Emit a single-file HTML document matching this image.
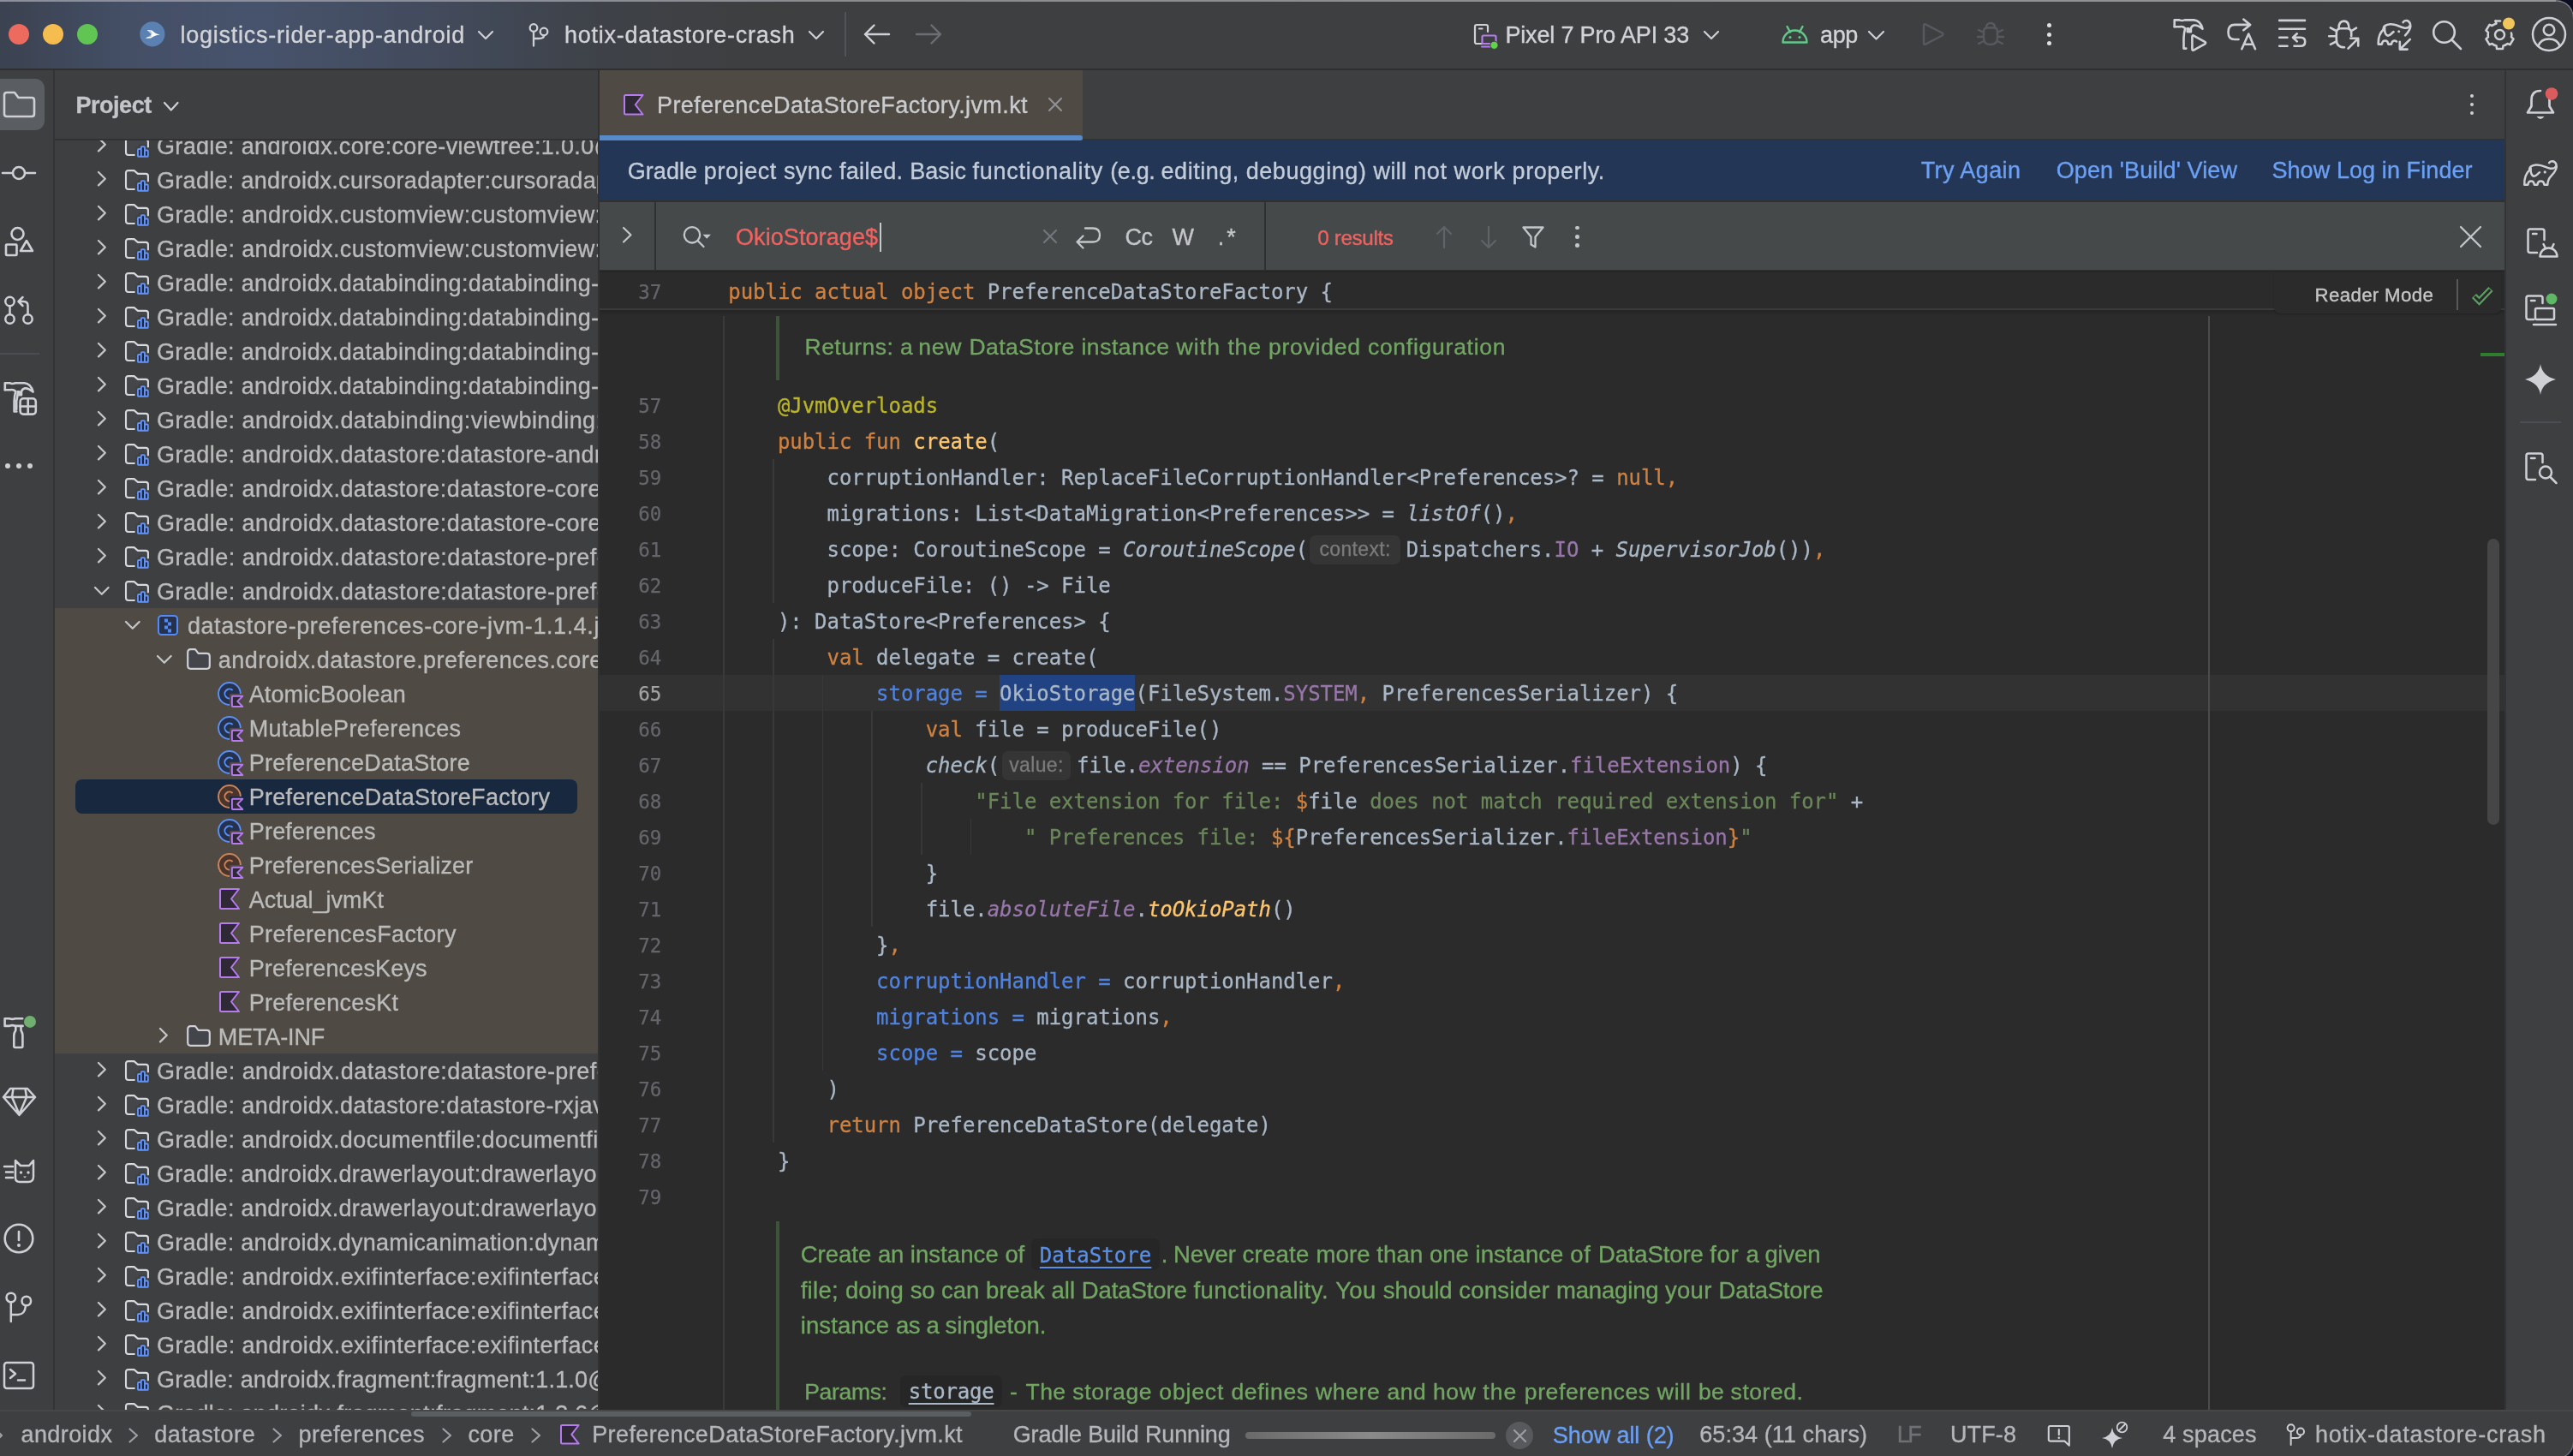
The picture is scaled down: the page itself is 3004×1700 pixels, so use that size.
<!DOCTYPE html>
<html lang="en"><head><meta charset="utf-8"><title>PreferenceDataStoreFactory.jvm.kt</title>
<style>
*{margin:0;padding:0;box-sizing:border-box}
html,body{width:3004px;height:1700px;overflow:hidden;background:#000}
#bg{position:absolute;left:0;top:0;width:3004px;height:1700px;background:#3e3f41}
#app{position:absolute;left:0;top:0;width:3004px;height:1700px;overflow:hidden;will-change:transform}
.r,.i,.t,.c{position:absolute}
.i{overflow:visible}
.t{white-space:pre;line-height:40px;height:40px;-webkit-text-stroke:0.35px currentColor}
.ui{font-family:"Liberation Sans",sans-serif;font-size:27px;font-weight:normal}
.uib{font-family:"Liberation Sans",sans-serif;font-size:27px;font-weight:bold}
.ui24{font-family:"Liberation Sans",sans-serif;font-size:24.3px;font-weight:normal}
.ui22{font-family:"Liberation Sans",sans-serif;font-size:22.3px;font-weight:normal}
.doc{font-family:"Liberation Sans",sans-serif;font-size:27.5px;font-weight:normal}
.docs{font-family:"Liberation Sans",sans-serif;font-size:26.5px;font-weight:normal}
.mono{font-family:"DejaVu Sans Mono","Liberation Mono",monospace;font-size:24px;font-weight:normal}

.ln{position:absolute;left:700px;width:72px;text-align:right;color:#64666b;height:42px;line-height:42px;font-size:22.5px;letter-spacing:-0.2px;-webkit-text-stroke:0.25px currentColor}
.cl{position:absolute;left:850.3px;height:42px;line-height:42px;white-space:pre;color:#a9b7c6;letter-spacing:-0.049px;-webkit-text-stroke:0.3px currentColor}
.k{color:#cf8140}.an{color:#bbb529}.fd{color:#ffc66d}.na{color:#5083e0}.p{color:#9876aa}.s{color:#6a8759}
.it{font-style:italic}
.hint{display:inline-block;vertical-align:top;height:34px;line-height:32px;margin-top:4px;border-radius:7px;background:#353535;color:#7b7b7b;
 font-family:"Liberation Sans",sans-serif;font-size:23px;font-style:normal;text-align:center;letter-spacing:0.35px}
</style></head>
<body><div id="bg"></div><div id="app">
<div class="r" style="left:0px;top:0px;width:3004px;height:80px;background:#3e3f41;background:linear-gradient(90deg,#3b4250 0px,#444f66 150px,#47536c 300px,#424a5b 520px,#3e4248 700px,#3e3f41 860px)"></div>
<div class="r" style="left:0px;top:80px;width:3004px;height:2px;background:#2d2f31;"></div>
<div class="r" style="left:10px;top:28px;width:24px;height:24px;background:#ed6a5f;border-radius:50%"></div>
<div class="r" style="left:50px;top:28px;width:24px;height:24px;background:#f5bd4f;border-radius:50%"></div>
<div class="r" style="left:90px;top:28px;width:24px;height:24px;background:#61c554;border-radius:50%"></div>
<svg class="i" style="left:160px;top:22px" width="36" height="36" viewBox="160 22 36 36"><circle cx="177.9" cy="39.8" r="14.6" fill="#5b80b2"/><path d="M186.8 40.4 C182.5 39.8 180 38 177.6 35.4 L171.6 35.1 L176 39.4 C176.8 40.1 176.8 40.6 176 41.2 L169.6 44.8 L176.2 44.6 C178.5 42.3 182 41 186.8 40.4 Z" fill="#fff"/><path d="M172.5 36.9 L176.5 37.2 M172.6 42.2 L176.6 42 M174.5 38.9 L177.6 39" stroke="#5b80b2" stroke-width="0.8" fill="none"/></svg>
<span class="t ui" style="left:210.6px;top:21.0px;color:#d1d3d7;letter-spacing:0.748px;">logistics-rider-app-android</span>
<svg class="i" style="left:556.5px;top:34.5px" width="20" height="12" viewBox="0 0 20 12" ><g fill="none" stroke="#ced0d6" stroke-width="2.2" stroke-linecap="round" stroke-linejoin="round" ><path d="M2 2 L10.0 10 L18 2"/></g></svg>
<svg class="i" style="left:617px;top:25.5px" width="26" height="30" viewBox="0 0 26 30" ><g fill="none" stroke="#ced0d6" stroke-width="2.3" stroke-linecap="round" stroke-linejoin="round" ><circle cx="6" cy="6.5" r="4.3"/><circle cx="18" cy="11" r="4.3"/><path d="M6 11 V27.5 M6 19 H12 Q18 19 18 15.5"/></g></svg>
<span class="t ui" style="left:659px;top:21.0px;color:#d1d3d7;letter-spacing:0.759px;">hotix-datastore-crash</span>
<svg class="i" style="left:942.5px;top:34.5px" width="20" height="12" viewBox="0 0 20 12" ><g fill="none" stroke="#ced0d6" stroke-width="2.2" stroke-linecap="round" stroke-linejoin="round" ><path d="M2 2 L10.0 10 L18 2"/></g></svg>
<div class="r" style="left:986px;top:14px;width:2px;height:52px;background:#505357;"></div>
<svg class="i" style="left:1007px;top:27px" width="34" height="26" viewBox="0 0 34 26" ><g fill="none" stroke="#ced0d6" stroke-width="2.4" stroke-linecap="round" stroke-linejoin="round" ><path d="M3 13 H31 M13.5 2.5 L3 13 L13.5 23.5"/></g></svg>
<svg class="i" style="left:1067px;top:27px" width="34" height="26" viewBox="0 0 34 26" ><g fill="none" stroke="#6b6e73" stroke-width="2.4" stroke-linecap="round" stroke-linejoin="round" transform="translate(34 0) scale(-1 1)"><path d="M3 13 H31 M13.5 2.5 L3 13 L13.5 23.5"/></g></svg>
<svg class="i" style="left:1720px;top:27px" width="30" height="31" viewBox="0 0 30 31" ><g fill="none" stroke="#ced0d6" stroke-width="2.2" stroke-linecap="round" stroke-linejoin="round" ><path d="M11 24 H4 Q2 24 2 22 V4 Q2 2 4 2 H15 Q17 2 17 4 V10 M7 6.5 H10.5"/></g><g fill="none" stroke="#b57bef" stroke-width="2.2" stroke-linecap="round" stroke-linejoin="round" ><rect x="10.5" y="14.5" width="16" height="9.5" rx="1.5"/><path d="M10 27.5 H20"/></g><circle cx="24.5" cy="25.8" r="4.6" fill="#5fd34a" stroke="#3c3f41" stroke-width="1"/></svg>
<span class="t ui" style="left:1757.4px;top:21.0px;color:#d1d3d7;letter-spacing:-0.166px;">Pixel 7 Pro API 33</span>
<svg class="i" style="left:1988.0px;top:34.5px" width="20" height="12" viewBox="0 0 20 12" ><g fill="none" stroke="#ced0d6" stroke-width="2.2" stroke-linecap="round" stroke-linejoin="round" ><path d="M2 2 L10.0 10 L18 2"/></g></svg>
<svg class="i" style="left:2079px;top:28px" width="34" height="24" viewBox="0 0 34 24" ><path d="M2.5 21.5 A14 14 0 0 1 30.5 21.5 Z" fill="none" stroke="#62c98a" stroke-width="2.4" stroke-linejoin="round"/><path d="M7.5 3 L11 9.5 M25.5 3 L22 9.5" stroke="#62c98a" stroke-width="2.4" stroke-linecap="round"/><circle cx="11" cy="15.5" r="1.5" fill="#62c98a"/><circle cx="22" cy="15.5" r="1.5" fill="#62c98a"/></svg>
<span class="t ui" style="left:2125px;top:21.0px;color:#d1d3d7;letter-spacing:-0.381px;">app</span>
<svg class="i" style="left:2180.0px;top:34.75px" width="21" height="12.5" viewBox="0 0 21 12.5" ><g fill="none" stroke="#ced0d6" stroke-width="2.2" stroke-linecap="round" stroke-linejoin="round" ><path d="M2 2 L10.5 10.5 L19 2"/></g></svg>
<svg class="i" style="left:2242px;top:25px" width="30" height="30" viewBox="0 0 30 30" ><g fill="none" stroke="#56595e" stroke-width="2.4" stroke-linecap="round" stroke-linejoin="round" ><path d="M4 4.5 Q4 2.5 6 3.4 L25.5 13.5 Q27.5 15 25.5 16.5 L6 26.6 Q4 27.5 4 25.5 Z"/></g></svg>
<svg class="i" style="left:2306px;top:23px" width="36" height="34" viewBox="0 0 36 34" ><g fill="none" stroke="#56595e" stroke-width="2.4" stroke-linecap="round" stroke-linejoin="round" ><path d="M10 14 Q10 9.5 14 9.5 H22 Q26 9.5 26 14 V21 Q26 29 18 29 Q10 29 10 21 Z M13 9 Q13 4 18 4 Q23 4 23 9 M10 15 L4 12 M10 20 H3 M10 25 L4 28 M26 15 L32 12 M26 20 H33 M26 25 L32 28"/></g></svg>
<div class="r" style="left:2389.5px;top:27.2px;width:5px;height:5px;background:#dfe1e5;border-radius:50%"></div>
<div class="r" style="left:2389.5px;top:37.5px;width:5px;height:5px;background:#dfe1e5;border-radius:50%"></div>
<div class="r" style="left:2389.5px;top:47.8px;width:5px;height:5px;background:#dfe1e5;border-radius:50%"></div>
<svg class="i" style="left:2530px;top:14px" width="52" height="52" viewBox="2530 14 52 52"><g fill="none" stroke="#ced0d6" stroke-width="2.6" stroke-linecap="round" stroke-linejoin="round" ><g transform="translate(2532.9 -423.9) scale(1.0)"><path d="M5.8 455.2 V447.3 H11.5 Q14.4 448.6 17.8 447.3 H28.5 Q36 447.8 38.6 457.6 Q33 452.8 28.8 453.4 Q26 454 25 457 V461.2 H22.4 V457.2 H20.9"/><path d="M20.9 457.2 V461"/><path d="M5.8 455.2 H12 Q15.5 454.2 18.3 457 Q16.8 462 16.6 468.5 V480.5 H19.4"/></g><path d="M2559.4 43 Q2559.4 40.6 2561.5 41.8 L2574.2 48.9 Q2576 50.1 2574.2 51.3 L2561.5 58.4 Q2559.4 59.6 2559.4 57.2 Z"/></g></svg>
<svg class="i" style="left:2594px;top:14px" width="48" height="52" viewBox="2594 14 48 52"><g fill="none" stroke="#ced0d6" stroke-width="2.6" stroke-linecap="round" stroke-linejoin="round" ><path d="M2626.8 28.9 H2609 Q2601.5 28.9 2601.5 37.4 Q2601.5 46 2609 46 H2613.5 M2619.3 22.6 L2627.2 28.9 L2619.3 35.3"/><path d="M2617.3 57.2 L2625.2 39.5 L2633 57.2 M2620 51.7 H2630.4"/></g></svg>
<svg class="i" style="left:2654px;top:14px" width="46" height="52" viewBox="2654 14 46 52"><g fill="none" stroke="#ced0d6" stroke-width="2.6" stroke-linecap="round" stroke-linejoin="round" ><path d="M2661.2 23.9 H2691 M2661.2 33.7 H2691 M2661.2 43.8 H2670.5 M2661.2 53.8 H2670.5"/><path d="M2678.5 53.8 H2686 Q2691.2 53.8 2691.2 48.8 Q2691.2 43.8 2686 43.8 H2677.5 M2681.8 39.3 L2677 43.8 L2681.8 48.4"/></g></svg>
<svg class="i" style="left:2712px;top:14px" width="50" height="52" viewBox="2712 14 50 52"><g fill="none" stroke="#ced0d6" stroke-width="2.6" stroke-linecap="round" stroke-linejoin="round" ><path d="M2737 55.3 Q2727.8 55.3 2727.8 46 V38.5 Q2727.8 33.2 2733 33.2 H2740 Q2745.2 33.2 2745.2 38.5 V42 M2730.6 32.5 Q2730.6 24.6 2736.5 24.6 Q2742.4 24.6 2742.4 32.5 M2727.5 36 L2720.8 32.4 M2727.5 42.2 H2719.2 M2727.5 48.5 L2720.8 51.8 M2745.5 36 L2751 32.6"/><path d="M2741.5 56.6 L2752.2 45.8 M2744.3 44.8 H2753.2 V53.6"/></g></svg>
<svg class="i" style="left:2770px;top:14px" width="52" height="52" viewBox="2770 14 52 52"><g fill="none" stroke="#ced0d6" stroke-width="2.6" stroke-linecap="round" stroke-linejoin="round" ><g transform="translate(-170.5 -164.1) scale(1)"><path d="M2976.1 190.2 C2977.5 187.5 2982.5 187 2984.3 191.5 C2985.8 196 2983.5 200.5 2978.6 205.4"/><path d="M2968.5 212.6 C2966.5 210.8 2963 211.2 2962.5 215.7 H2958.8 C2958.2 210.2 2952 210.2 2951.4 215.7 H2947.3 C2946.8 207 2949 202.5 2953.4 198.4"/><path d="M2953.4 198.4 C2952.5 194.8 2956 192.8 2961 192.4 C2968 192 2972 195.5 2977.5 196.7 C2980.5 197.2 2983 196.3 2984.3 194"/><path d="M2954.7 196.5 C2954.2 201 2955.5 205.5 2958.6 205.7 C2961 205.7 2962.5 203 2965 201.3"/></g></g><circle cx="2800.7" cy="36.8" r="1.5" fill="#ced0d6"/><g fill="none" stroke="#ced0d6" stroke-width="2.6" stroke-linecap="round" stroke-linejoin="round" ><path d="M2813.8 45.8 L2802.6 57 M2801.8 48.8 V57.6 H2810.6"/></g></svg>
<svg class="i" style="left:2838px;top:22px" width="38" height="38" viewBox="0 0 38 38" ><g fill="none" stroke="#ced0d6" stroke-width="2.6" stroke-linecap="round" stroke-linejoin="round" ><circle cx="15.5" cy="15.5" r="12.3"/><path d="M24.5 24.5 L35 35"/></g></svg>
<svg class="i" style="left:2897px;top:18px" width="42" height="44" viewBox="0 0 42 44" ><g fill="none" stroke="#ced0d6" stroke-width="2.5" stroke-linecap="round" stroke-linejoin="round" ><path d="M16.5 6.5 L17.5 9.5 Q14.5 10.3 12.5 12 L9.5 10.8 L5.5 17.5 L8 19.8 Q7.3 22.5 8 25.2 L5.5 27.5 L9.5 34.2 L12.5 33 Q14.5 34.7 17.5 35.5 L18 39 H25 L25.5 35.5 Q28.5 34.7 30.5 33 L33.5 34.2 L37.5 27.5 L35 25.2 Q35.7 22.5 35 20.5"/><path d="M16.5 6.5 H22"/><circle cx="21.5" cy="22.5" r="5.5"/></g><circle cx="32" cy="9.5" r="7" fill="#f2c55c"/></svg>
<svg class="i" style="left:2955px;top:19px" width="42" height="42" viewBox="0 0 42 42" ><g fill="none" stroke="#ced0d6" stroke-width="2.5" stroke-linecap="round" stroke-linejoin="round" ><circle cx="21" cy="21" r="19"/><circle cx="21" cy="16" r="6.3"/><path d="M8.5 35 Q11 26.5 21 26.5 Q31 26.5 33.5 35"/></g></svg>
<div class="r" style="left:62px;top:82px;width:2px;height:1565px;background:#323437;"></div>
<div class="r" style="left:-12px;top:92px;width:64px;height:60px;background:#5a5d61;border-radius:11px"></div>
<svg class="i" style="left:2px;top:105px" width="42" height="34" viewBox="0 0 42 34" ><g fill="none" stroke="#ced0d6" stroke-width="2.6" stroke-linecap="round" stroke-linejoin="round" ><path d="M3 6 Q3 3 6 3 H15 L19.5 9 H35 Q38 9 38 12 V28 Q38 31 35 31 H6 Q3 31 3 28 Z"/></g></svg>
<svg class="i" style="left:0px;top:190px" width="46" height="24" viewBox="0 0 46 24" ><g fill="none" stroke="#ced0d6" stroke-width="2.6" stroke-linecap="round" stroke-linejoin="round" ><path d="M3 12 H14 M30 12 H41"/><circle cx="22" cy="12" r="7"/></g></svg>
<svg class="i" style="left:2px;top:262px" width="42" height="40" viewBox="0 0 42 40" ><g fill="none" stroke="#ced0d6" stroke-width="2.6" stroke-linecap="round" stroke-linejoin="round" ><circle cx="18.5" cy="11" r="7"/><rect x="5" y="23.5" width="12.5" height="12.5" rx="1"/><path d="M29 19 L36 31 H22 Z"/></g></svg>
<svg class="i" style="left:2px;top:342px" width="42" height="40" viewBox="0 0 42 40" ><g fill="none" stroke="#ced0d6" stroke-width="2.5" stroke-linecap="round" stroke-linejoin="round" ><circle cx="9.5" cy="10" r="5.2"/><circle cx="9.5" cy="30.5" r="5.2"/><circle cx="30.5" cy="30.5" r="5.2"/><path d="M9.5 15.5 V25 M30.5 25 V15 Q30.5 10 25.5 10 H20 M24.5 5 L19.5 10 L24.5 15"/></g></svg>
<div class="r" style="left:0px;top:412px;width:46px;height:2px;background:#4a4d51;"></div>
<svg class="i" style="left:0px;top:440px" width="48" height="50" viewBox="0 440 48 50"><g fill="none" stroke="#ced0d6" stroke-width="2.6" stroke-linecap="round" stroke-linejoin="round" ><path d="M5.8 455.2 V447.3 H11.5 Q14.4 448.6 17.8 447.3 H28.5 Q36 447.8 38.6 457.6 Q33 452.8 28.8 453.4 Q26 454 25 457 V461.2 H22.4 V457.2 H20.9"/><path d="M20.9 457.2 Q20.6 463 19.2 468.5 V478"/><path d="M5.8 455.2 H12 Q15.5 454.2 18.3 457 Q16.8 462 16.6 468.5 V480.5 H19.4"/><rect x="23.6" y="465.3" width="18.2" height="18.3" rx="3.6"/><path d="M32.7 465.3 V483.6 M23.6 474.5 H41.8"/></g></svg>
<div class="r" style="left:5.8px;top:540.5999999999999px;width:6.4px;height:6.4px;background:#ced0d6;border-radius:50%"></div>
<div class="r" style="left:18.8px;top:540.5999999999999px;width:6.4px;height:6.4px;background:#ced0d6;border-radius:50%"></div>
<div class="r" style="left:31.8px;top:540.5999999999999px;width:6.4px;height:6.4px;background:#ced0d6;border-radius:50%"></div>
<svg class="i" style="left:0px;top:1180px" width="48" height="50" viewBox="0 1180 48 50"><g fill="none" stroke="#ced0d6" stroke-width="2.6" stroke-linecap="round" stroke-linejoin="round" ><path d="M26.2 1189.2 H17.7 Q14.4 1190.6 11 1189.2 H5.6 V1197.9 H11 Q14.4 1196.4 17.5 1197.9 H26.6"/><path d="M18.3 1198 V1203 Q16.3 1206 16.3 1209 V1221.5 Q16.3 1223 17.8 1223 H25 Q26.4 1223 26.4 1221.5 V1209 Q26.4 1206 24.5 1203 V1198"/></g><circle cx="35" cy="1192.9" r="7" fill="#70af70"/></svg>
<svg class="i" style="left:1px;top:1268px" width="44" height="38" viewBox="0 0 44 38" ><g fill="none" stroke="#ced0d6" stroke-width="2.5" stroke-linecap="round" stroke-linejoin="round" ><path d="M11 3 H31 L40 13 L21.5 34 L3 13 Z M3 13 H40 M14.5 3 L13 13 L21.5 33 M28.5 3 L30 13 L21.5 33"/></g></svg>
<svg class="i" style="left:2px;top:1350px" width="42" height="34" viewBox="0 0 42 34" ><g fill="none" stroke="#ced0d6" stroke-width="2.5" stroke-linecap="round" stroke-linejoin="round" ><path d="M16 5 L22 11 H32 L37 5 V24 Q37 30 31 30 H21 Q16 30 16 25 Z M3 12 H13 M5 18.5 H13 M5 25 H13"/></g><circle cx="22.5" cy="19" r="1.7" fill="#ced0d6"/><circle cx="31" cy="19" r="1.7" fill="#ced0d6"/><path d="M25 23.5 H29 L27 25.5 Z" fill="#ced0d6"/></svg>
<svg class="i" style="left:2px;top:1426px" width="40" height="40" viewBox="0 0 40 40" ><g fill="none" stroke="#ced0d6" stroke-width="2.6" stroke-linecap="round" stroke-linejoin="round" ><circle cx="20" cy="20" r="16.3"/><path d="M20 12 V22"/></g><circle cx="20" cy="28" r="2" fill="#ced0d6"/></svg>
<svg class="i" style="left:3px;top:1506px" width="38" height="42" viewBox="0 0 38 42" ><g fill="none" stroke="#ced0d6" stroke-width="2.5" stroke-linecap="round" stroke-linejoin="round" ><circle cx="9.8" cy="9" r="5.3"/><circle cx="27.8" cy="13" r="5.3"/><path d="M9.8 14.5 V37 M9.8 29 H18 Q26 29 27 18.5"/></g></svg>
<svg class="i" style="left:2px;top:1588px" width="40" height="36" viewBox="0 0 40 36" ><g fill="none" stroke="#ced0d6" stroke-width="2.5" stroke-linecap="round" stroke-linejoin="round" ><rect x="3" y="3" width="34" height="30" rx="3"/><path d="M10 11 L16 16 L10 21 M19 23.5 H27"/></g></svg>
<span class="t uib" style="left:88.4px;top:102.5px;color:#c3c5c9;letter-spacing:-0.458px;">Project</span>
<svg class="i" style="left:190.25px;top:118.25px" width="19.5" height="12.5" viewBox="0 0 19.5 12.5" ><g fill="none" stroke="#ced0d6" stroke-width="2.2" stroke-linecap="round" stroke-linejoin="round" ><path d="M2 2 L9.75 10.5 L17.5 2"/></g></svg>
<div class="r" style="left:64px;top:162px;width:634px;height:2px;background:#303234;"></div>
<div class="r" style="left:64px;top:710px;width:634px;height:520px;background:#4f4b44;"></div>
<div class="r" style="left:88px;top:910px;width:586px;height:40px;background:#17283f;border-radius:8px"></div>
<div class="r" style="left:698px;top:82px;width:2px;height:1565px;background:#2f3133;"></div>
<div class="c" style="left:64px;top:164px;width:634px;height:1483px;overflow:hidden">
<svg class="i" style="left:48.50000000000001px;top:-4.8px" width="11.8" height="19.4" viewBox="0 0 11.8 19.4" ><g fill="none" stroke="#c4c5c7" stroke-width="2.3" stroke-linecap="round" stroke-linejoin="round" stroke-linecap="butt"><path d="M2 2 L9.8 9.7 L2 17.4"/></g></svg>
<svg class="i" style="left:81px;top:-7.0px" width="32" height="30" viewBox="0 0 32 30" ><path d="M2 5.1 Q2 2.1 5 2.1 H11.6 L15.9 5.9 H25.2 Q27.9 5.9 27.9 8.6 V24 H5 Q2 24 2 21 Z" fill="#44464a"/><path d="M13.4 29 V15.6 Q13.4 14.4 14.6 14.4 H17.1 V12.8 Q17.1 11.6 18.3 11.6 H25.4 Q26.6 11.6 26.6 12.8 V15.9 H30.6 V29 Z" fill="#3e3f41"/><path d="M27.9 15.2 V8.6 Q27.9 5.9 25.2 5.9 H15.9 L11.6 2.1 H5 Q2 2.1 2 5.1 V21 Q2 24 5 24 H12.6" fill="none" stroke="#d6d8dc" stroke-width="2.1" stroke-linejoin="round" stroke-linecap="butt"/><g fill="#1b253c" stroke="#6494f8" stroke-width="1.9" stroke-linejoin="round"><rect x="16" y="17" width="3.8" height="8.8" rx="0.9"/><rect x="19.8" y="14.2" width="4.2" height="11.6" rx="0.9"/><rect x="24" y="18.5" width="3.8" height="7.3" rx="0.9"/></g></svg>
<span class="t ui" style="left:119.0px;top:-13.5px;color:#bbbbbb;letter-spacing:0.335px;">Gradle: androidx.core:core-viewtree:1.0.0@aar</span>
<svg class="i" style="left:48.50000000000001px;top:35.199999999999996px" width="11.8" height="19.4" viewBox="0 0 11.8 19.4" ><g fill="none" stroke="#c4c5c7" stroke-width="2.3" stroke-linecap="round" stroke-linejoin="round" stroke-linecap="butt"><path d="M2 2 L9.8 9.7 L2 17.4"/></g></svg>
<svg class="i" style="left:81px;top:33.0px" width="32" height="30" viewBox="0 0 32 30" ><path d="M2 5.1 Q2 2.1 5 2.1 H11.6 L15.9 5.9 H25.2 Q27.9 5.9 27.9 8.6 V24 H5 Q2 24 2 21 Z" fill="#44464a"/><path d="M13.4 29 V15.6 Q13.4 14.4 14.6 14.4 H17.1 V12.8 Q17.1 11.6 18.3 11.6 H25.4 Q26.6 11.6 26.6 12.8 V15.9 H30.6 V29 Z" fill="#3e3f41"/><path d="M27.9 15.2 V8.6 Q27.9 5.9 25.2 5.9 H15.9 L11.6 2.1 H5 Q2 2.1 2 5.1 V21 Q2 24 5 24 H12.6" fill="none" stroke="#d6d8dc" stroke-width="2.1" stroke-linejoin="round" stroke-linecap="butt"/><g fill="#1b253c" stroke="#6494f8" stroke-width="1.9" stroke-linejoin="round"><rect x="16" y="17" width="3.8" height="8.8" rx="0.9"/><rect x="19.8" y="14.2" width="4.2" height="11.6" rx="0.9"/><rect x="24" y="18.5" width="3.8" height="7.3" rx="0.9"/></g></svg>
<span class="t ui" style="left:119.0px;top:26.5px;color:#bbbbbb;letter-spacing:0.293px;">Gradle: androidx.cursoradapter:cursoradapter:1.0.0@aar</span>
<svg class="i" style="left:48.50000000000001px;top:75.2px" width="11.8" height="19.4" viewBox="0 0 11.8 19.4" ><g fill="none" stroke="#c4c5c7" stroke-width="2.3" stroke-linecap="round" stroke-linejoin="round" stroke-linecap="butt"><path d="M2 2 L9.8 9.7 L2 17.4"/></g></svg>
<svg class="i" style="left:81px;top:73.0px" width="32" height="30" viewBox="0 0 32 30" ><path d="M2 5.1 Q2 2.1 5 2.1 H11.6 L15.9 5.9 H25.2 Q27.9 5.9 27.9 8.6 V24 H5 Q2 24 2 21 Z" fill="#44464a"/><path d="M13.4 29 V15.6 Q13.4 14.4 14.6 14.4 H17.1 V12.8 Q17.1 11.6 18.3 11.6 H25.4 Q26.6 11.6 26.6 12.8 V15.9 H30.6 V29 Z" fill="#3e3f41"/><path d="M27.9 15.2 V8.6 Q27.9 5.9 25.2 5.9 H15.9 L11.6 2.1 H5 Q2 2.1 2 5.1 V21 Q2 24 5 24 H12.6" fill="none" stroke="#d6d8dc" stroke-width="2.1" stroke-linejoin="round" stroke-linecap="butt"/><g fill="#1b253c" stroke="#6494f8" stroke-width="1.9" stroke-linejoin="round"><rect x="16" y="17" width="3.8" height="8.8" rx="0.9"/><rect x="19.8" y="14.2" width="4.2" height="11.6" rx="0.9"/><rect x="24" y="18.5" width="3.8" height="7.3" rx="0.9"/></g></svg>
<span class="t ui" style="left:119.0px;top:66.5px;color:#bbbbbb;letter-spacing:0.392px;">Gradle: androidx.customview:customview:1.1.0@aar</span>
<svg class="i" style="left:48.50000000000001px;top:115.2px" width="11.8" height="19.4" viewBox="0 0 11.8 19.4" ><g fill="none" stroke="#c4c5c7" stroke-width="2.3" stroke-linecap="round" stroke-linejoin="round" stroke-linecap="butt"><path d="M2 2 L9.8 9.7 L2 17.4"/></g></svg>
<svg class="i" style="left:81px;top:113.0px" width="32" height="30" viewBox="0 0 32 30" ><path d="M2 5.1 Q2 2.1 5 2.1 H11.6 L15.9 5.9 H25.2 Q27.9 5.9 27.9 8.6 V24 H5 Q2 24 2 21 Z" fill="#44464a"/><path d="M13.4 29 V15.6 Q13.4 14.4 14.6 14.4 H17.1 V12.8 Q17.1 11.6 18.3 11.6 H25.4 Q26.6 11.6 26.6 12.8 V15.9 H30.6 V29 Z" fill="#3e3f41"/><path d="M27.9 15.2 V8.6 Q27.9 5.9 25.2 5.9 H15.9 L11.6 2.1 H5 Q2 2.1 2 5.1 V21 Q2 24 5 24 H12.6" fill="none" stroke="#d6d8dc" stroke-width="2.1" stroke-linejoin="round" stroke-linecap="butt"/><g fill="#1b253c" stroke="#6494f8" stroke-width="1.9" stroke-linejoin="round"><rect x="16" y="17" width="3.8" height="8.8" rx="0.9"/><rect x="19.8" y="14.2" width="4.2" height="11.6" rx="0.9"/><rect x="24" y="18.5" width="3.8" height="7.3" rx="0.9"/></g></svg>
<span class="t ui" style="left:119.0px;top:106.5px;color:#bbbbbb;letter-spacing:0.392px;">Gradle: androidx.customview:customview:1.1.0@aar</span>
<svg class="i" style="left:48.50000000000001px;top:155.20000000000002px" width="11.8" height="19.4" viewBox="0 0 11.8 19.4" ><g fill="none" stroke="#c4c5c7" stroke-width="2.3" stroke-linecap="round" stroke-linejoin="round" stroke-linecap="butt"><path d="M2 2 L9.8 9.7 L2 17.4"/></g></svg>
<svg class="i" style="left:81px;top:153.0px" width="32" height="30" viewBox="0 0 32 30" ><path d="M2 5.1 Q2 2.1 5 2.1 H11.6 L15.9 5.9 H25.2 Q27.9 5.9 27.9 8.6 V24 H5 Q2 24 2 21 Z" fill="#44464a"/><path d="M13.4 29 V15.6 Q13.4 14.4 14.6 14.4 H17.1 V12.8 Q17.1 11.6 18.3 11.6 H25.4 Q26.6 11.6 26.6 12.8 V15.9 H30.6 V29 Z" fill="#3e3f41"/><path d="M27.9 15.2 V8.6 Q27.9 5.9 25.2 5.9 H15.9 L11.6 2.1 H5 Q2 2.1 2 5.1 V21 Q2 24 5 24 H12.6" fill="none" stroke="#d6d8dc" stroke-width="2.1" stroke-linejoin="round" stroke-linecap="butt"/><g fill="#1b253c" stroke="#6494f8" stroke-width="1.9" stroke-linejoin="round"><rect x="16" y="17" width="3.8" height="8.8" rx="0.9"/><rect x="19.8" y="14.2" width="4.2" height="11.6" rx="0.9"/><rect x="24" y="18.5" width="3.8" height="7.3" rx="0.9"/></g></svg>
<span class="t ui" style="left:119.0px;top:146.5px;color:#bbbbbb;letter-spacing:0.328px;">Gradle: androidx.databinding:databinding-adapters:8.5.0@aar</span>
<svg class="i" style="left:48.50000000000001px;top:195.20000000000002px" width="11.8" height="19.4" viewBox="0 0 11.8 19.4" ><g fill="none" stroke="#c4c5c7" stroke-width="2.3" stroke-linecap="round" stroke-linejoin="round" stroke-linecap="butt"><path d="M2 2 L9.8 9.7 L2 17.4"/></g></svg>
<svg class="i" style="left:81px;top:193.0px" width="32" height="30" viewBox="0 0 32 30" ><path d="M2 5.1 Q2 2.1 5 2.1 H11.6 L15.9 5.9 H25.2 Q27.9 5.9 27.9 8.6 V24 H5 Q2 24 2 21 Z" fill="#44464a"/><path d="M13.4 29 V15.6 Q13.4 14.4 14.6 14.4 H17.1 V12.8 Q17.1 11.6 18.3 11.6 H25.4 Q26.6 11.6 26.6 12.8 V15.9 H30.6 V29 Z" fill="#3e3f41"/><path d="M27.9 15.2 V8.6 Q27.9 5.9 25.2 5.9 H15.9 L11.6 2.1 H5 Q2 2.1 2 5.1 V21 Q2 24 5 24 H12.6" fill="none" stroke="#d6d8dc" stroke-width="2.1" stroke-linejoin="round" stroke-linecap="butt"/><g fill="#1b253c" stroke="#6494f8" stroke-width="1.9" stroke-linejoin="round"><rect x="16" y="17" width="3.8" height="8.8" rx="0.9"/><rect x="19.8" y="14.2" width="4.2" height="11.6" rx="0.9"/><rect x="24" y="18.5" width="3.8" height="7.3" rx="0.9"/></g></svg>
<span class="t ui" style="left:119.0px;top:186.5px;color:#bbbbbb;letter-spacing:0.328px;">Gradle: androidx.databinding:databinding-common:8.5.0</span>
<svg class="i" style="left:48.50000000000001px;top:235.20000000000002px" width="11.8" height="19.4" viewBox="0 0 11.8 19.4" ><g fill="none" stroke="#c4c5c7" stroke-width="2.3" stroke-linecap="round" stroke-linejoin="round" stroke-linecap="butt"><path d="M2 2 L9.8 9.7 L2 17.4"/></g></svg>
<svg class="i" style="left:81px;top:233.0px" width="32" height="30" viewBox="0 0 32 30" ><path d="M2 5.1 Q2 2.1 5 2.1 H11.6 L15.9 5.9 H25.2 Q27.9 5.9 27.9 8.6 V24 H5 Q2 24 2 21 Z" fill="#44464a"/><path d="M13.4 29 V15.6 Q13.4 14.4 14.6 14.4 H17.1 V12.8 Q17.1 11.6 18.3 11.6 H25.4 Q26.6 11.6 26.6 12.8 V15.9 H30.6 V29 Z" fill="#3e3f41"/><path d="M27.9 15.2 V8.6 Q27.9 5.9 25.2 5.9 H15.9 L11.6 2.1 H5 Q2 2.1 2 5.1 V21 Q2 24 5 24 H12.6" fill="none" stroke="#d6d8dc" stroke-width="2.1" stroke-linejoin="round" stroke-linecap="butt"/><g fill="#1b253c" stroke="#6494f8" stroke-width="1.9" stroke-linejoin="round"><rect x="16" y="17" width="3.8" height="8.8" rx="0.9"/><rect x="19.8" y="14.2" width="4.2" height="11.6" rx="0.9"/><rect x="24" y="18.5" width="3.8" height="7.3" rx="0.9"/></g></svg>
<span class="t ui" style="left:119.0px;top:226.5px;color:#bbbbbb;letter-spacing:0.328px;">Gradle: androidx.databinding:databinding-ktx:8.5.0@aar</span>
<svg class="i" style="left:48.50000000000001px;top:275.2px" width="11.8" height="19.4" viewBox="0 0 11.8 19.4" ><g fill="none" stroke="#c4c5c7" stroke-width="2.3" stroke-linecap="round" stroke-linejoin="round" stroke-linecap="butt"><path d="M2 2 L9.8 9.7 L2 17.4"/></g></svg>
<svg class="i" style="left:81px;top:273.0px" width="32" height="30" viewBox="0 0 32 30" ><path d="M2 5.1 Q2 2.1 5 2.1 H11.6 L15.9 5.9 H25.2 Q27.9 5.9 27.9 8.6 V24 H5 Q2 24 2 21 Z" fill="#44464a"/><path d="M13.4 29 V15.6 Q13.4 14.4 14.6 14.4 H17.1 V12.8 Q17.1 11.6 18.3 11.6 H25.4 Q26.6 11.6 26.6 12.8 V15.9 H30.6 V29 Z" fill="#3e3f41"/><path d="M27.9 15.2 V8.6 Q27.9 5.9 25.2 5.9 H15.9 L11.6 2.1 H5 Q2 2.1 2 5.1 V21 Q2 24 5 24 H12.6" fill="none" stroke="#d6d8dc" stroke-width="2.1" stroke-linejoin="round" stroke-linecap="butt"/><g fill="#1b253c" stroke="#6494f8" stroke-width="1.9" stroke-linejoin="round"><rect x="16" y="17" width="3.8" height="8.8" rx="0.9"/><rect x="19.8" y="14.2" width="4.2" height="11.6" rx="0.9"/><rect x="24" y="18.5" width="3.8" height="7.3" rx="0.9"/></g></svg>
<span class="t ui" style="left:119.0px;top:266.5px;color:#bbbbbb;letter-spacing:0.328px;">Gradle: androidx.databinding:databinding-runtime:8.5.0@aar</span>
<svg class="i" style="left:48.50000000000001px;top:315.2px" width="11.8" height="19.4" viewBox="0 0 11.8 19.4" ><g fill="none" stroke="#c4c5c7" stroke-width="2.3" stroke-linecap="round" stroke-linejoin="round" stroke-linecap="butt"><path d="M2 2 L9.8 9.7 L2 17.4"/></g></svg>
<svg class="i" style="left:81px;top:313.0px" width="32" height="30" viewBox="0 0 32 30" ><path d="M2 5.1 Q2 2.1 5 2.1 H11.6 L15.9 5.9 H25.2 Q27.9 5.9 27.9 8.6 V24 H5 Q2 24 2 21 Z" fill="#44464a"/><path d="M13.4 29 V15.6 Q13.4 14.4 14.6 14.4 H17.1 V12.8 Q17.1 11.6 18.3 11.6 H25.4 Q26.6 11.6 26.6 12.8 V15.9 H30.6 V29 Z" fill="#3e3f41"/><path d="M27.9 15.2 V8.6 Q27.9 5.9 25.2 5.9 H15.9 L11.6 2.1 H5 Q2 2.1 2 5.1 V21 Q2 24 5 24 H12.6" fill="none" stroke="#d6d8dc" stroke-width="2.1" stroke-linejoin="round" stroke-linecap="butt"/><g fill="#1b253c" stroke="#6494f8" stroke-width="1.9" stroke-linejoin="round"><rect x="16" y="17" width="3.8" height="8.8" rx="0.9"/><rect x="19.8" y="14.2" width="4.2" height="11.6" rx="0.9"/><rect x="24" y="18.5" width="3.8" height="7.3" rx="0.9"/></g></svg>
<span class="t ui" style="left:119.0px;top:306.5px;color:#bbbbbb;letter-spacing:0.43px;">Gradle: androidx.databinding:viewbinding:8.5.0@aar</span>
<svg class="i" style="left:48.50000000000001px;top:355.2px" width="11.8" height="19.4" viewBox="0 0 11.8 19.4" ><g fill="none" stroke="#c4c5c7" stroke-width="2.3" stroke-linecap="round" stroke-linejoin="round" stroke-linecap="butt"><path d="M2 2 L9.8 9.7 L2 17.4"/></g></svg>
<svg class="i" style="left:81px;top:353.0px" width="32" height="30" viewBox="0 0 32 30" ><path d="M2 5.1 Q2 2.1 5 2.1 H11.6 L15.9 5.9 H25.2 Q27.9 5.9 27.9 8.6 V24 H5 Q2 24 2 21 Z" fill="#44464a"/><path d="M13.4 29 V15.6 Q13.4 14.4 14.6 14.4 H17.1 V12.8 Q17.1 11.6 18.3 11.6 H25.4 Q26.6 11.6 26.6 12.8 V15.9 H30.6 V29 Z" fill="#3e3f41"/><path d="M27.9 15.2 V8.6 Q27.9 5.9 25.2 5.9 H15.9 L11.6 2.1 H5 Q2 2.1 2 5.1 V21 Q2 24 5 24 H12.6" fill="none" stroke="#d6d8dc" stroke-width="2.1" stroke-linejoin="round" stroke-linecap="butt"/><g fill="#1b253c" stroke="#6494f8" stroke-width="1.9" stroke-linejoin="round"><rect x="16" y="17" width="3.8" height="8.8" rx="0.9"/><rect x="19.8" y="14.2" width="4.2" height="11.6" rx="0.9"/><rect x="24" y="18.5" width="3.8" height="7.3" rx="0.9"/></g></svg>
<span class="t ui" style="left:119.0px;top:346.5px;color:#bbbbbb;letter-spacing:0.43px;">Gradle: androidx.datastore:datastore-android:1.1.4@aar</span>
<svg class="i" style="left:48.50000000000001px;top:395.2px" width="11.8" height="19.4" viewBox="0 0 11.8 19.4" ><g fill="none" stroke="#c4c5c7" stroke-width="2.3" stroke-linecap="round" stroke-linejoin="round" stroke-linecap="butt"><path d="M2 2 L9.8 9.7 L2 17.4"/></g></svg>
<svg class="i" style="left:81px;top:393.0px" width="32" height="30" viewBox="0 0 32 30" ><path d="M2 5.1 Q2 2.1 5 2.1 H11.6 L15.9 5.9 H25.2 Q27.9 5.9 27.9 8.6 V24 H5 Q2 24 2 21 Z" fill="#44464a"/><path d="M13.4 29 V15.6 Q13.4 14.4 14.6 14.4 H17.1 V12.8 Q17.1 11.6 18.3 11.6 H25.4 Q26.6 11.6 26.6 12.8 V15.9 H30.6 V29 Z" fill="#3e3f41"/><path d="M27.9 15.2 V8.6 Q27.9 5.9 25.2 5.9 H15.9 L11.6 2.1 H5 Q2 2.1 2 5.1 V21 Q2 24 5 24 H12.6" fill="none" stroke="#d6d8dc" stroke-width="2.1" stroke-linejoin="round" stroke-linecap="butt"/><g fill="#1b253c" stroke="#6494f8" stroke-width="1.9" stroke-linejoin="round"><rect x="16" y="17" width="3.8" height="8.8" rx="0.9"/><rect x="19.8" y="14.2" width="4.2" height="11.6" rx="0.9"/><rect x="24" y="18.5" width="3.8" height="7.3" rx="0.9"/></g></svg>
<span class="t ui" style="left:119.0px;top:386.5px;color:#bbbbbb;letter-spacing:0.428px;">Gradle: androidx.datastore:datastore-core-android:1.1.4@aar</span>
<svg class="i" style="left:48.50000000000001px;top:435.2px" width="11.8" height="19.4" viewBox="0 0 11.8 19.4" ><g fill="none" stroke="#c4c5c7" stroke-width="2.3" stroke-linecap="round" stroke-linejoin="round" stroke-linecap="butt"><path d="M2 2 L9.8 9.7 L2 17.4"/></g></svg>
<svg class="i" style="left:81px;top:433.0px" width="32" height="30" viewBox="0 0 32 30" ><path d="M2 5.1 Q2 2.1 5 2.1 H11.6 L15.9 5.9 H25.2 Q27.9 5.9 27.9 8.6 V24 H5 Q2 24 2 21 Z" fill="#44464a"/><path d="M13.4 29 V15.6 Q13.4 14.4 14.6 14.4 H17.1 V12.8 Q17.1 11.6 18.3 11.6 H25.4 Q26.6 11.6 26.6 12.8 V15.9 H30.6 V29 Z" fill="#3e3f41"/><path d="M27.9 15.2 V8.6 Q27.9 5.9 25.2 5.9 H15.9 L11.6 2.1 H5 Q2 2.1 2 5.1 V21 Q2 24 5 24 H12.6" fill="none" stroke="#d6d8dc" stroke-width="2.1" stroke-linejoin="round" stroke-linecap="butt"/><g fill="#1b253c" stroke="#6494f8" stroke-width="1.9" stroke-linejoin="round"><rect x="16" y="17" width="3.8" height="8.8" rx="0.9"/><rect x="19.8" y="14.2" width="4.2" height="11.6" rx="0.9"/><rect x="24" y="18.5" width="3.8" height="7.3" rx="0.9"/></g></svg>
<span class="t ui" style="left:119.0px;top:426.5px;color:#bbbbbb;letter-spacing:0.428px;">Gradle: androidx.datastore:datastore-core-okio-jvm:1.1.4</span>
<svg class="i" style="left:48.50000000000001px;top:475.2px" width="11.8" height="19.4" viewBox="0 0 11.8 19.4" ><g fill="none" stroke="#c4c5c7" stroke-width="2.3" stroke-linecap="round" stroke-linejoin="round" stroke-linecap="butt"><path d="M2 2 L9.8 9.7 L2 17.4"/></g></svg>
<svg class="i" style="left:81px;top:473.0px" width="32" height="30" viewBox="0 0 32 30" ><path d="M2 5.1 Q2 2.1 5 2.1 H11.6 L15.9 5.9 H25.2 Q27.9 5.9 27.9 8.6 V24 H5 Q2 24 2 21 Z" fill="#44464a"/><path d="M13.4 29 V15.6 Q13.4 14.4 14.6 14.4 H17.1 V12.8 Q17.1 11.6 18.3 11.6 H25.4 Q26.6 11.6 26.6 12.8 V15.9 H30.6 V29 Z" fill="#3e3f41"/><path d="M27.9 15.2 V8.6 Q27.9 5.9 25.2 5.9 H15.9 L11.6 2.1 H5 Q2 2.1 2 5.1 V21 Q2 24 5 24 H12.6" fill="none" stroke="#d6d8dc" stroke-width="2.1" stroke-linejoin="round" stroke-linecap="butt"/><g fill="#1b253c" stroke="#6494f8" stroke-width="1.9" stroke-linejoin="round"><rect x="16" y="17" width="3.8" height="8.8" rx="0.9"/><rect x="19.8" y="14.2" width="4.2" height="11.6" rx="0.9"/><rect x="24" y="18.5" width="3.8" height="7.3" rx="0.9"/></g></svg>
<span class="t ui" style="left:119.0px;top:466.5px;color:#bbbbbb;letter-spacing:0.449px;">Gradle: androidx.datastore:datastore-preferences-android:1.1.4@aar</span>
<svg class="i" style="left:44.7px;top:519.6px" width="19.6" height="11.8" viewBox="0 0 19.6 11.8" ><g fill="none" stroke="#c4c5c7" stroke-width="2.3" stroke-linecap="round" stroke-linejoin="round" ><path d="M2 2 L9.8 9.8 L17.6 2"/></g></svg>
<svg class="i" style="left:81px;top:513.0px" width="32" height="30" viewBox="0 0 32 30" ><path d="M2 5.1 Q2 2.1 5 2.1 H11.6 L15.9 5.9 H25.2 Q27.9 5.9 27.9 8.6 V24 H5 Q2 24 2 21 Z" fill="#44464a"/><path d="M13.4 29 V15.6 Q13.4 14.4 14.6 14.4 H17.1 V12.8 Q17.1 11.6 18.3 11.6 H25.4 Q26.6 11.6 26.6 12.8 V15.9 H30.6 V29 Z" fill="#3e3f41"/><path d="M27.9 15.2 V8.6 Q27.9 5.9 25.2 5.9 H15.9 L11.6 2.1 H5 Q2 2.1 2 5.1 V21 Q2 24 5 24 H12.6" fill="none" stroke="#d6d8dc" stroke-width="2.1" stroke-linejoin="round" stroke-linecap="butt"/><g fill="#1b253c" stroke="#6494f8" stroke-width="1.9" stroke-linejoin="round"><rect x="16" y="17" width="3.8" height="8.8" rx="0.9"/><rect x="19.8" y="14.2" width="4.2" height="11.6" rx="0.9"/><rect x="24" y="18.5" width="3.8" height="7.3" rx="0.9"/></g></svg>
<span class="t ui" style="left:119.0px;top:506.5px;color:#bbbbbb;letter-spacing:0.449px;">Gradle: androidx.datastore:datastore-preferences-core-jvm:1.1.4</span>
<svg class="i" style="left:81.10000000000001px;top:559.6px" width="19.6" height="11.8" viewBox="0 0 19.6 11.8" ><g fill="none" stroke="#c4c5c7" stroke-width="2.3" stroke-linecap="round" stroke-linejoin="round" ><path d="M2 2 L9.8 9.8 L17.6 2"/></g></svg>
<svg class="i" style="left:120.3px;top:553.7px" width="24" height="24" viewBox="0 0 24 24" ><rect x="1" y="1" width="22" height="22" rx="3.5" fill="#25324d" stroke="#548af7" stroke-width="2"/><g fill="#548af7"><rect x="8" y="4.5" width="4" height="4"/><rect x="12" y="8.5" width="4" height="4"/><rect x="8" y="12.5" width="4" height="4"/><rect x="12" y="16.5" width="4" height="4"/></g></svg>
<span class="t ui" style="left:154.9px;top:546.5px;color:#bbbbbb;letter-spacing:0.576px;">datastore-preferences-core-jvm-1.1.4.jar</span>
<svg class="i" style="left:117.50000000000001px;top:599.6px" width="19.6" height="11.8" viewBox="0 0 19.6 11.8" ><g fill="none" stroke="#c4c5c7" stroke-width="2.3" stroke-linecap="round" stroke-linejoin="round" ><path d="M2 2 L9.8 9.8 L17.6 2"/></g></svg>
<svg class="i" style="left:154px;top:593.0px" width="28" height="25" viewBox="0 0 28 25" ><path d="M1.2 4.5 Q1.2 1.2 4.5 1.2 H10 L13.5 5.8 H23.5 Q26.8 5.8 26.8 9 V20.5 Q26.8 23.8 23.5 23.8 H4.5 Q1.2 23.8 1.2 20.5 Z" fill="#43454a" stroke="#ced0d6" stroke-width="2.2" stroke-linejoin="round"/></svg>
<span class="t ui" style="left:190.8px;top:586.5px;color:#bbbbbb;letter-spacing:0.43px;">androidx.datastore.preferences.core</span>
<svg class="i" style="left:190px;top:631.9px" width="32" height="32" viewBox="0 0 32 32" ><circle cx="13.9" cy="14" r="12.9" fill="#25324d" stroke="#5b8ff5" stroke-width="2"/><path d="M17.6 9.9 A5.5 5.5 0 1 0 17.6 18.1" fill="none" stroke="#5b8ff5" stroke-width="2"/><path d="M15.4 13.9 H32 V32 H14 V15.3 Q14 13.9 15.4 13.9 Z" fill="#4f4b44"/><path d="M17.8 16.8 H29.3 L23.2 22.9 L29.3 29 H17.8 Q16.9 29 16.9 28.1 V17.7 Q16.9 16.8 17.8 16.8 Z" fill="#2f2936" stroke="#b57bef" stroke-width="1.9" stroke-linejoin="round"/></svg>
<span class="t ui" style="left:226.7px;top:626.5px;color:#bbbbbb;letter-spacing:0.133px;">AtomicBoolean</span>
<svg class="i" style="left:190px;top:671.9px" width="32" height="32" viewBox="0 0 32 32" ><circle cx="13.9" cy="14" r="12.9" fill="#25324d" stroke="#5b8ff5" stroke-width="2"/><path d="M17.6 9.9 A5.5 5.5 0 1 0 17.6 18.1" fill="none" stroke="#5b8ff5" stroke-width="2"/><path d="M15.4 13.9 H32 V32 H14 V15.3 Q14 13.9 15.4 13.9 Z" fill="#4f4b44"/><path d="M17.8 16.8 H29.3 L23.2 22.9 L29.3 29 H17.8 Q16.9 29 16.9 28.1 V17.7 Q16.9 16.8 17.8 16.8 Z" fill="#2f2936" stroke="#b57bef" stroke-width="1.9" stroke-linejoin="round"/></svg>
<span class="t ui" style="left:226.7px;top:666.5px;color:#bbbbbb;letter-spacing:0.339px;">MutablePreferences</span>
<svg class="i" style="left:190px;top:711.9px" width="32" height="32" viewBox="0 0 32 32" ><circle cx="13.9" cy="14" r="12.9" fill="#25324d" stroke="#5b8ff5" stroke-width="2"/><path d="M17.6 9.9 A5.5 5.5 0 1 0 17.6 18.1" fill="none" stroke="#5b8ff5" stroke-width="2"/><path d="M15.4 13.9 H32 V32 H14 V15.3 Q14 13.9 15.4 13.9 Z" fill="#4f4b44"/><path d="M17.8 16.8 H29.3 L23.2 22.9 L29.3 29 H17.8 Q16.9 29 16.9 28.1 V17.7 Q16.9 16.8 17.8 16.8 Z" fill="#2f2936" stroke="#b57bef" stroke-width="1.9" stroke-linejoin="round"/></svg>
<span class="t ui" style="left:226.7px;top:706.5px;color:#bbbbbb;letter-spacing:0.248px;">PreferenceDataStore</span>
<svg class="i" style="left:190px;top:751.9px" width="32" height="32" viewBox="0 0 32 32" ><circle cx="13.9" cy="14" r="12.9" fill="#4a342b" stroke="#c8845a" stroke-width="2"/><path d="M17.6 9.9 A5.5 5.5 0 1 0 17.6 18.1" fill="none" stroke="#c8845a" stroke-width="2"/><path d="M15.4 13.9 H32 V32 H14 V15.3 Q14 13.9 15.4 13.9 Z" fill="#17283f"/><path d="M17.8 16.8 H29.3 L23.2 22.9 L29.3 29 H17.8 Q16.9 29 16.9 28.1 V17.7 Q16.9 16.8 17.8 16.8 Z" fill="#2f2936" stroke="#b57bef" stroke-width="1.9" stroke-linejoin="round"/></svg>
<span class="t ui" style="left:226.7px;top:746.5px;color:#bbbbbb;letter-spacing:0.305px;">PreferenceDataStoreFactory</span>
<svg class="i" style="left:190px;top:791.9px" width="32" height="32" viewBox="0 0 32 32" ><circle cx="13.9" cy="14" r="12.9" fill="#25324d" stroke="#5b8ff5" stroke-width="2"/><path d="M17.6 9.9 A5.5 5.5 0 1 0 17.6 18.1" fill="none" stroke="#5b8ff5" stroke-width="2"/><path d="M15.4 13.9 H32 V32 H14 V15.3 Q14 13.9 15.4 13.9 Z" fill="#4f4b44"/><path d="M17.8 16.8 H29.3 L23.2 22.9 L29.3 29 H17.8 Q16.9 29 16.9 28.1 V17.7 Q16.9 16.8 17.8 16.8 Z" fill="#2f2936" stroke="#b57bef" stroke-width="1.9" stroke-linejoin="round"/></svg>
<span class="t ui" style="left:226.7px;top:786.5px;color:#bbbbbb;letter-spacing:0.222px;">Preferences</span>
<svg class="i" style="left:190px;top:831.9px" width="32" height="32" viewBox="0 0 32 32" ><circle cx="13.9" cy="14" r="12.9" fill="#4a342b" stroke="#c8845a" stroke-width="2"/><path d="M17.6 9.9 A5.5 5.5 0 1 0 17.6 18.1" fill="none" stroke="#c8845a" stroke-width="2"/><path d="M15.4 13.9 H32 V32 H14 V15.3 Q14 13.9 15.4 13.9 Z" fill="#4f4b44"/><path d="M17.8 16.8 H29.3 L23.2 22.9 L29.3 29 H17.8 Q16.9 29 16.9 28.1 V17.7 Q16.9 16.8 17.8 16.8 Z" fill="#2f2936" stroke="#b57bef" stroke-width="1.9" stroke-linejoin="round"/></svg>
<span class="t ui" style="left:226.7px;top:826.5px;color:#bbbbbb;letter-spacing:0.175px;">PreferencesSerializer</span>
<svg class="i" style="left:191.5px;top:873.2px" width="25" height="25" viewBox="0 0 25 25" ><path d="M2.5 1.0 H23.0 L14.0 12.5 L23.0 24.0 H2.5 Q1.0 24.0 1.0 22.5 V2.5 Q1.0 1.0 2.5 1.0 Z" fill="#2f2936" stroke="#b57bef" stroke-width="2" stroke-linejoin="round"/></svg>
<span class="t ui" style="left:226.7px;top:866.5px;color:#bbbbbb;letter-spacing:-0.024px;">Actual_jvmKt</span>
<svg class="i" style="left:191.5px;top:913.2px" width="25" height="25" viewBox="0 0 25 25" ><path d="M2.5 1.0 H23.0 L14.0 12.5 L23.0 24.0 H2.5 Q1.0 24.0 1.0 22.5 V2.5 Q1.0 1.0 2.5 1.0 Z" fill="#2f2936" stroke="#b57bef" stroke-width="2" stroke-linejoin="round"/></svg>
<span class="t ui" style="left:226.7px;top:906.5px;color:#bbbbbb;letter-spacing:0.359px;">PreferencesFactory</span>
<svg class="i" style="left:191.5px;top:953.2px" width="25" height="25" viewBox="0 0 25 25" ><path d="M2.5 1.0 H23.0 L14.0 12.5 L23.0 24.0 H2.5 Q1.0 24.0 1.0 22.5 V2.5 Q1.0 1.0 2.5 1.0 Z" fill="#2f2936" stroke="#b57bef" stroke-width="2" stroke-linejoin="round"/></svg>
<span class="t ui" style="left:226.7px;top:946.5px;color:#bbbbbb;letter-spacing:0.164px;">PreferencesKeys</span>
<svg class="i" style="left:191.5px;top:993.2px" width="25" height="25" viewBox="0 0 25 25" ><path d="M2.5 1.0 H23.0 L14.0 12.5 L23.0 24.0 H2.5 Q1.0 24.0 1.0 22.5 V2.5 Q1.0 1.0 2.5 1.0 Z" fill="#2f2936" stroke="#b57bef" stroke-width="2" stroke-linejoin="round"/></svg>
<span class="t ui" style="left:226.7px;top:986.5px;color:#bbbbbb;letter-spacing:0.276px;">PreferencesKt</span>
<svg class="i" style="left:121.29999999999998px;top:1035.2px" width="11.8" height="19.4" viewBox="0 0 11.8 19.4" ><g fill="none" stroke="#c4c5c7" stroke-width="2.3" stroke-linecap="round" stroke-linejoin="round" stroke-linecap="butt"><path d="M2 2 L9.8 9.7 L2 17.4"/></g></svg>
<svg class="i" style="left:154px;top:1033.0px" width="28" height="25" viewBox="0 0 28 25" ><path d="M1.2 4.5 Q1.2 1.2 4.5 1.2 H10 L13.5 5.8 H23.5 Q26.8 5.8 26.8 9 V20.5 Q26.8 23.8 23.5 23.8 H4.5 Q1.2 23.8 1.2 20.5 Z" fill="#43454a" stroke="#ced0d6" stroke-width="2.2" stroke-linejoin="round"/></svg>
<span class="t ui" style="left:190.8px;top:1026.5px;color:#bbbbbb;letter-spacing:-0.141px;">META-INF</span>
<svg class="i" style="left:48.50000000000001px;top:1075.2px" width="11.8" height="19.4" viewBox="0 0 11.8 19.4" ><g fill="none" stroke="#c4c5c7" stroke-width="2.3" stroke-linecap="round" stroke-linejoin="round" stroke-linecap="butt"><path d="M2 2 L9.8 9.7 L2 17.4"/></g></svg>
<svg class="i" style="left:81px;top:1073.0px" width="32" height="30" viewBox="0 0 32 30" ><path d="M2 5.1 Q2 2.1 5 2.1 H11.6 L15.9 5.9 H25.2 Q27.9 5.9 27.9 8.6 V24 H5 Q2 24 2 21 Z" fill="#44464a"/><path d="M13.4 29 V15.6 Q13.4 14.4 14.6 14.4 H17.1 V12.8 Q17.1 11.6 18.3 11.6 H25.4 Q26.6 11.6 26.6 12.8 V15.9 H30.6 V29 Z" fill="#3e3f41"/><path d="M27.9 15.2 V8.6 Q27.9 5.9 25.2 5.9 H15.9 L11.6 2.1 H5 Q2 2.1 2 5.1 V21 Q2 24 5 24 H12.6" fill="none" stroke="#d6d8dc" stroke-width="2.1" stroke-linejoin="round" stroke-linecap="butt"/><g fill="#1b253c" stroke="#6494f8" stroke-width="1.9" stroke-linejoin="round"><rect x="16" y="17" width="3.8" height="8.8" rx="0.9"/><rect x="19.8" y="14.2" width="4.2" height="11.6" rx="0.9"/><rect x="24" y="18.5" width="3.8" height="7.3" rx="0.9"/></g></svg>
<span class="t ui" style="left:119.0px;top:1066.5px;color:#bbbbbb;letter-spacing:0.449px;">Gradle: androidx.datastore:datastore-preferences-proto:1.1.4</span>
<svg class="i" style="left:48.50000000000001px;top:1115.2px" width="11.8" height="19.4" viewBox="0 0 11.8 19.4" ><g fill="none" stroke="#c4c5c7" stroke-width="2.3" stroke-linecap="round" stroke-linejoin="round" stroke-linecap="butt"><path d="M2 2 L9.8 9.7 L2 17.4"/></g></svg>
<svg class="i" style="left:81px;top:1113.0px" width="32" height="30" viewBox="0 0 32 30" ><path d="M2 5.1 Q2 2.1 5 2.1 H11.6 L15.9 5.9 H25.2 Q27.9 5.9 27.9 8.6 V24 H5 Q2 24 2 21 Z" fill="#44464a"/><path d="M13.4 29 V15.6 Q13.4 14.4 14.6 14.4 H17.1 V12.8 Q17.1 11.6 18.3 11.6 H25.4 Q26.6 11.6 26.6 12.8 V15.9 H30.6 V29 Z" fill="#3e3f41"/><path d="M27.9 15.2 V8.6 Q27.9 5.9 25.2 5.9 H15.9 L11.6 2.1 H5 Q2 2.1 2 5.1 V21 Q2 24 5 24 H12.6" fill="none" stroke="#d6d8dc" stroke-width="2.1" stroke-linejoin="round" stroke-linecap="butt"/><g fill="#1b253c" stroke="#6494f8" stroke-width="1.9" stroke-linejoin="round"><rect x="16" y="17" width="3.8" height="8.8" rx="0.9"/><rect x="19.8" y="14.2" width="4.2" height="11.6" rx="0.9"/><rect x="24" y="18.5" width="3.8" height="7.3" rx="0.9"/></g></svg>
<span class="t ui" style="left:119.0px;top:1106.5px;color:#bbbbbb;letter-spacing:0.408px;">Gradle: androidx.datastore:datastore-rxjava2:1.1.4@aar</span>
<svg class="i" style="left:48.50000000000001px;top:1155.2px" width="11.8" height="19.4" viewBox="0 0 11.8 19.4" ><g fill="none" stroke="#c4c5c7" stroke-width="2.3" stroke-linecap="round" stroke-linejoin="round" stroke-linecap="butt"><path d="M2 2 L9.8 9.7 L2 17.4"/></g></svg>
<svg class="i" style="left:81px;top:1153.0px" width="32" height="30" viewBox="0 0 32 30" ><path d="M2 5.1 Q2 2.1 5 2.1 H11.6 L15.9 5.9 H25.2 Q27.9 5.9 27.9 8.6 V24 H5 Q2 24 2 21 Z" fill="#44464a"/><path d="M13.4 29 V15.6 Q13.4 14.4 14.6 14.4 H17.1 V12.8 Q17.1 11.6 18.3 11.6 H25.4 Q26.6 11.6 26.6 12.8 V15.9 H30.6 V29 Z" fill="#3e3f41"/><path d="M27.9 15.2 V8.6 Q27.9 5.9 25.2 5.9 H15.9 L11.6 2.1 H5 Q2 2.1 2 5.1 V21 Q2 24 5 24 H12.6" fill="none" stroke="#d6d8dc" stroke-width="2.1" stroke-linejoin="round" stroke-linecap="butt"/><g fill="#1b253c" stroke="#6494f8" stroke-width="1.9" stroke-linejoin="round"><rect x="16" y="17" width="3.8" height="8.8" rx="0.9"/><rect x="19.8" y="14.2" width="4.2" height="11.6" rx="0.9"/><rect x="24" y="18.5" width="3.8" height="7.3" rx="0.9"/></g></svg>
<span class="t ui" style="left:119.0px;top:1146.5px;color:#bbbbbb;letter-spacing:0.395px;">Gradle: androidx.documentfile:documentfile:1.0.0@aar</span>
<svg class="i" style="left:48.50000000000001px;top:1195.2px" width="11.8" height="19.4" viewBox="0 0 11.8 19.4" ><g fill="none" stroke="#c4c5c7" stroke-width="2.3" stroke-linecap="round" stroke-linejoin="round" stroke-linecap="butt"><path d="M2 2 L9.8 9.7 L2 17.4"/></g></svg>
<svg class="i" style="left:81px;top:1193.0px" width="32" height="30" viewBox="0 0 32 30" ><path d="M2 5.1 Q2 2.1 5 2.1 H11.6 L15.9 5.9 H25.2 Q27.9 5.9 27.9 8.6 V24 H5 Q2 24 2 21 Z" fill="#44464a"/><path d="M13.4 29 V15.6 Q13.4 14.4 14.6 14.4 H17.1 V12.8 Q17.1 11.6 18.3 11.6 H25.4 Q26.6 11.6 26.6 12.8 V15.9 H30.6 V29 Z" fill="#3e3f41"/><path d="M27.9 15.2 V8.6 Q27.9 5.9 25.2 5.9 H15.9 L11.6 2.1 H5 Q2 2.1 2 5.1 V21 Q2 24 5 24 H12.6" fill="none" stroke="#d6d8dc" stroke-width="2.1" stroke-linejoin="round" stroke-linecap="butt"/><g fill="#1b253c" stroke="#6494f8" stroke-width="1.9" stroke-linejoin="round"><rect x="16" y="17" width="3.8" height="8.8" rx="0.9"/><rect x="19.8" y="14.2" width="4.2" height="11.6" rx="0.9"/><rect x="24" y="18.5" width="3.8" height="7.3" rx="0.9"/></g></svg>
<span class="t ui" style="left:119.0px;top:1186.5px;color:#bbbbbb;letter-spacing:0.314px;">Gradle: androidx.drawerlayout:drawerlayout:1.1.1@aar</span>
<svg class="i" style="left:48.50000000000001px;top:1235.2px" width="11.8" height="19.4" viewBox="0 0 11.8 19.4" ><g fill="none" stroke="#c4c5c7" stroke-width="2.3" stroke-linecap="round" stroke-linejoin="round" stroke-linecap="butt"><path d="M2 2 L9.8 9.7 L2 17.4"/></g></svg>
<svg class="i" style="left:81px;top:1233.0px" width="32" height="30" viewBox="0 0 32 30" ><path d="M2 5.1 Q2 2.1 5 2.1 H11.6 L15.9 5.9 H25.2 Q27.9 5.9 27.9 8.6 V24 H5 Q2 24 2 21 Z" fill="#44464a"/><path d="M13.4 29 V15.6 Q13.4 14.4 14.6 14.4 H17.1 V12.8 Q17.1 11.6 18.3 11.6 H25.4 Q26.6 11.6 26.6 12.8 V15.9 H30.6 V29 Z" fill="#3e3f41"/><path d="M27.9 15.2 V8.6 Q27.9 5.9 25.2 5.9 H15.9 L11.6 2.1 H5 Q2 2.1 2 5.1 V21 Q2 24 5 24 H12.6" fill="none" stroke="#d6d8dc" stroke-width="2.1" stroke-linejoin="round" stroke-linecap="butt"/><g fill="#1b253c" stroke="#6494f8" stroke-width="1.9" stroke-linejoin="round"><rect x="16" y="17" width="3.8" height="8.8" rx="0.9"/><rect x="19.8" y="14.2" width="4.2" height="11.6" rx="0.9"/><rect x="24" y="18.5" width="3.8" height="7.3" rx="0.9"/></g></svg>
<span class="t ui" style="left:119.0px;top:1226.5px;color:#bbbbbb;letter-spacing:0.314px;">Gradle: androidx.drawerlayout:drawerlayout:1.1.1@aar</span>
<svg class="i" style="left:48.50000000000001px;top:1275.2px" width="11.8" height="19.4" viewBox="0 0 11.8 19.4" ><g fill="none" stroke="#c4c5c7" stroke-width="2.3" stroke-linecap="round" stroke-linejoin="round" stroke-linecap="butt"><path d="M2 2 L9.8 9.7 L2 17.4"/></g></svg>
<svg class="i" style="left:81px;top:1273.0px" width="32" height="30" viewBox="0 0 32 30" ><path d="M2 5.1 Q2 2.1 5 2.1 H11.6 L15.9 5.9 H25.2 Q27.9 5.9 27.9 8.6 V24 H5 Q2 24 2 21 Z" fill="#44464a"/><path d="M13.4 29 V15.6 Q13.4 14.4 14.6 14.4 H17.1 V12.8 Q17.1 11.6 18.3 11.6 H25.4 Q26.6 11.6 26.6 12.8 V15.9 H30.6 V29 Z" fill="#3e3f41"/><path d="M27.9 15.2 V8.6 Q27.9 5.9 25.2 5.9 H15.9 L11.6 2.1 H5 Q2 2.1 2 5.1 V21 Q2 24 5 24 H12.6" fill="none" stroke="#d6d8dc" stroke-width="2.1" stroke-linejoin="round" stroke-linecap="butt"/><g fill="#1b253c" stroke="#6494f8" stroke-width="1.9" stroke-linejoin="round"><rect x="16" y="17" width="3.8" height="8.8" rx="0.9"/><rect x="19.8" y="14.2" width="4.2" height="11.6" rx="0.9"/><rect x="24" y="18.5" width="3.8" height="7.3" rx="0.9"/></g></svg>
<span class="t ui" style="left:119.0px;top:1266.5px;color:#bbbbbb;letter-spacing:0.269px;">Gradle: androidx.dynamicanimation:dynamicanimation:1.0.0@aar</span>
<svg class="i" style="left:48.50000000000001px;top:1315.2px" width="11.8" height="19.4" viewBox="0 0 11.8 19.4" ><g fill="none" stroke="#c4c5c7" stroke-width="2.3" stroke-linecap="round" stroke-linejoin="round" stroke-linecap="butt"><path d="M2 2 L9.8 9.7 L2 17.4"/></g></svg>
<svg class="i" style="left:81px;top:1313.0px" width="32" height="30" viewBox="0 0 32 30" ><path d="M2 5.1 Q2 2.1 5 2.1 H11.6 L15.9 5.9 H25.2 Q27.9 5.9 27.9 8.6 V24 H5 Q2 24 2 21 Z" fill="#44464a"/><path d="M13.4 29 V15.6 Q13.4 14.4 14.6 14.4 H17.1 V12.8 Q17.1 11.6 18.3 11.6 H25.4 Q26.6 11.6 26.6 12.8 V15.9 H30.6 V29 Z" fill="#3e3f41"/><path d="M27.9 15.2 V8.6 Q27.9 5.9 25.2 5.9 H15.9 L11.6 2.1 H5 Q2 2.1 2 5.1 V21 Q2 24 5 24 H12.6" fill="none" stroke="#d6d8dc" stroke-width="2.1" stroke-linejoin="round" stroke-linecap="butt"/><g fill="#1b253c" stroke="#6494f8" stroke-width="1.9" stroke-linejoin="round"><rect x="16" y="17" width="3.8" height="8.8" rx="0.9"/><rect x="19.8" y="14.2" width="4.2" height="11.6" rx="0.9"/><rect x="24" y="18.5" width="3.8" height="7.3" rx="0.9"/></g></svg>
<span class="t ui" style="left:119.0px;top:1306.5px;color:#bbbbbb;letter-spacing:0.443px;">Gradle: androidx.exifinterface:exifinterface:1.3.6@aar</span>
<svg class="i" style="left:48.50000000000001px;top:1355.2px" width="11.8" height="19.4" viewBox="0 0 11.8 19.4" ><g fill="none" stroke="#c4c5c7" stroke-width="2.3" stroke-linecap="round" stroke-linejoin="round" stroke-linecap="butt"><path d="M2 2 L9.8 9.7 L2 17.4"/></g></svg>
<svg class="i" style="left:81px;top:1353.0px" width="32" height="30" viewBox="0 0 32 30" ><path d="M2 5.1 Q2 2.1 5 2.1 H11.6 L15.9 5.9 H25.2 Q27.9 5.9 27.9 8.6 V24 H5 Q2 24 2 21 Z" fill="#44464a"/><path d="M13.4 29 V15.6 Q13.4 14.4 14.6 14.4 H17.1 V12.8 Q17.1 11.6 18.3 11.6 H25.4 Q26.6 11.6 26.6 12.8 V15.9 H30.6 V29 Z" fill="#3e3f41"/><path d="M27.9 15.2 V8.6 Q27.9 5.9 25.2 5.9 H15.9 L11.6 2.1 H5 Q2 2.1 2 5.1 V21 Q2 24 5 24 H12.6" fill="none" stroke="#d6d8dc" stroke-width="2.1" stroke-linejoin="round" stroke-linecap="butt"/><g fill="#1b253c" stroke="#6494f8" stroke-width="1.9" stroke-linejoin="round"><rect x="16" y="17" width="3.8" height="8.8" rx="0.9"/><rect x="19.8" y="14.2" width="4.2" height="11.6" rx="0.9"/><rect x="24" y="18.5" width="3.8" height="7.3" rx="0.9"/></g></svg>
<span class="t ui" style="left:119.0px;top:1346.5px;color:#bbbbbb;letter-spacing:0.443px;">Gradle: androidx.exifinterface:exifinterface:1.3.6@aar</span>
<svg class="i" style="left:48.50000000000001px;top:1395.2px" width="11.8" height="19.4" viewBox="0 0 11.8 19.4" ><g fill="none" stroke="#c4c5c7" stroke-width="2.3" stroke-linecap="round" stroke-linejoin="round" stroke-linecap="butt"><path d="M2 2 L9.8 9.7 L2 17.4"/></g></svg>
<svg class="i" style="left:81px;top:1393.0px" width="32" height="30" viewBox="0 0 32 30" ><path d="M2 5.1 Q2 2.1 5 2.1 H11.6 L15.9 5.9 H25.2 Q27.9 5.9 27.9 8.6 V24 H5 Q2 24 2 21 Z" fill="#44464a"/><path d="M13.4 29 V15.6 Q13.4 14.4 14.6 14.4 H17.1 V12.8 Q17.1 11.6 18.3 11.6 H25.4 Q26.6 11.6 26.6 12.8 V15.9 H30.6 V29 Z" fill="#3e3f41"/><path d="M27.9 15.2 V8.6 Q27.9 5.9 25.2 5.9 H15.9 L11.6 2.1 H5 Q2 2.1 2 5.1 V21 Q2 24 5 24 H12.6" fill="none" stroke="#d6d8dc" stroke-width="2.1" stroke-linejoin="round" stroke-linecap="butt"/><g fill="#1b253c" stroke="#6494f8" stroke-width="1.9" stroke-linejoin="round"><rect x="16" y="17" width="3.8" height="8.8" rx="0.9"/><rect x="19.8" y="14.2" width="4.2" height="11.6" rx="0.9"/><rect x="24" y="18.5" width="3.8" height="7.3" rx="0.9"/></g></svg>
<span class="t ui" style="left:119.0px;top:1386.5px;color:#bbbbbb;letter-spacing:0.443px;">Gradle: androidx.exifinterface:exifinterface:1.3.7@aar</span>
<svg class="i" style="left:48.50000000000001px;top:1435.2px" width="11.8" height="19.4" viewBox="0 0 11.8 19.4" ><g fill="none" stroke="#c4c5c7" stroke-width="2.3" stroke-linecap="round" stroke-linejoin="round" stroke-linecap="butt"><path d="M2 2 L9.8 9.7 L2 17.4"/></g></svg>
<svg class="i" style="left:81px;top:1433.0px" width="32" height="30" viewBox="0 0 32 30" ><path d="M2 5.1 Q2 2.1 5 2.1 H11.6 L15.9 5.9 H25.2 Q27.9 5.9 27.9 8.6 V24 H5 Q2 24 2 21 Z" fill="#44464a"/><path d="M13.4 29 V15.6 Q13.4 14.4 14.6 14.4 H17.1 V12.8 Q17.1 11.6 18.3 11.6 H25.4 Q26.6 11.6 26.6 12.8 V15.9 H30.6 V29 Z" fill="#3e3f41"/><path d="M27.9 15.2 V8.6 Q27.9 5.9 25.2 5.9 H15.9 L11.6 2.1 H5 Q2 2.1 2 5.1 V21 Q2 24 5 24 H12.6" fill="none" stroke="#d6d8dc" stroke-width="2.1" stroke-linejoin="round" stroke-linecap="butt"/><g fill="#1b253c" stroke="#6494f8" stroke-width="1.9" stroke-linejoin="round"><rect x="16" y="17" width="3.8" height="8.8" rx="0.9"/><rect x="19.8" y="14.2" width="4.2" height="11.6" rx="0.9"/><rect x="24" y="18.5" width="3.8" height="7.3" rx="0.9"/></g></svg>
<span class="t ui" style="left:119.0px;top:1426.5px;color:#bbbbbb;letter-spacing:0.200px;">Gradle: androidx.fragment:fragment:1.1.0@aar</span>
<svg class="i" style="left:48.50000000000001px;top:1475.2px" width="11.8" height="19.4" viewBox="0 0 11.8 19.4" ><g fill="none" stroke="#c4c5c7" stroke-width="2.3" stroke-linecap="round" stroke-linejoin="round" stroke-linecap="butt"><path d="M2 2 L9.8 9.7 L2 17.4"/></g></svg>
<svg class="i" style="left:81px;top:1473.0px" width="32" height="30" viewBox="0 0 32 30" ><path d="M2 5.1 Q2 2.1 5 2.1 H11.6 L15.9 5.9 H25.2 Q27.9 5.9 27.9 8.6 V24 H5 Q2 24 2 21 Z" fill="#44464a"/><path d="M13.4 29 V15.6 Q13.4 14.4 14.6 14.4 H17.1 V12.8 Q17.1 11.6 18.3 11.6 H25.4 Q26.6 11.6 26.6 12.8 V15.9 H30.6 V29 Z" fill="#3e3f41"/><path d="M27.9 15.2 V8.6 Q27.9 5.9 25.2 5.9 H15.9 L11.6 2.1 H5 Q2 2.1 2 5.1 V21 Q2 24 5 24 H12.6" fill="none" stroke="#d6d8dc" stroke-width="2.1" stroke-linejoin="round" stroke-linecap="butt"/><g fill="#1b253c" stroke="#6494f8" stroke-width="1.9" stroke-linejoin="round"><rect x="16" y="17" width="3.8" height="8.8" rx="0.9"/><rect x="19.8" y="14.2" width="4.2" height="11.6" rx="0.9"/><rect x="24" y="18.5" width="3.8" height="7.3" rx="0.9"/></g></svg>
<span class="t ui" style="left:119.0px;top:1466.5px;color:#bbbbbb;letter-spacing:0.200px;">Gradle: androidx.fragment:fragment:1.3.6@aar</span>
</div>
<div class="r" style="left:700px;top:82px;width:564px;height:82px;background:#4f4b44;"></div>
<div class="r" style="left:1264px;top:162px;width:1661px;height:2px;background:#303234;"></div>
<div class="r" style="left:700px;top:158px;width:564px;height:6px;background:#5889c9;border-radius:0 3px 3px 0"></div>
<svg class="i" style="left:728px;top:110px" width="24.5" height="24.5" viewBox="0 0 24.5 24.5" ><path d="M2.5 1.0 H22.5 L13.75 12.25 L22.5 23.5 H2.5 Q1.0 23.5 1.0 22.0 V2.5 Q1.0 1.0 2.5 1.0 Z" fill="#2f2936" stroke="#b57bef" stroke-width="2" stroke-linejoin="round"/></svg>
<span class="t ui" style="left:767px;top:102.8px;color:#c9cbcf;letter-spacing:0.404px;">PreferenceDataStoreFactory.jvm.kt</span>
<svg class="i" style="left:1223px;top:113px" width="18" height="18" viewBox="0 0 18 18" ><g fill="none" stroke="#8d9095" stroke-width="2.2" stroke-linecap="round" stroke-linejoin="round" ><path d="M2 2 L16 16 M16 2 L2 16"/></g></svg>
<div class="r" style="left:2883.7px;top:109.7px;width:4.6px;height:4.6px;background:#ced0d6;border-radius:50%"></div>
<div class="r" style="left:2883.7px;top:119.7px;width:4.6px;height:4.6px;background:#ced0d6;border-radius:50%"></div>
<div class="r" style="left:2883.7px;top:129.7px;width:4.6px;height:4.6px;background:#ced0d6;border-radius:50%"></div>
<div class="r" style="left:2924px;top:82px;width:2px;height:1565px;background:#323437;"></div>
<svg class="i" style="left:2946px;top:102px" width="44" height="40" viewBox="0 0 44 40" ><g fill="none" stroke="#ced0d6" stroke-width="2.7" stroke-linecap="round" stroke-linejoin="round" ><path d="M20 4 Q9.5 4 9.5 15 V22 L5 29.5 H35 L30.5 22 V15 Q30.5 12 29.8 10.5" /></g><path d="M15.5 34 H24.5 Q20 40 15.5 34 Z" fill="#ced0d6"/><circle cx="33" cy="7.5" r="7.3" fill="#db5c5c"/></svg>
<svg class="i" style="left:2940px;top:180px" width="52" height="44" viewBox="2940 180 52 44"><g fill="none" stroke="#ced0d6" stroke-width="2.5" stroke-linecap="round" stroke-linejoin="round" ><path d="M2976.1 190.2 C2977.5 187.5 2982.5 187 2984.3 191.5 C2985.8 196 2983.5 200.5 2978.6 205.4 C2975.5 208.3 2974.5 210.5 2974.3 215.7 H2970.4 C2969.8 210.2 2963 210.2 2962.5 215.7 H2958.8 C2958.2 210.2 2952 210.2 2951.4 215.7 H2947.3 C2946.8 207 2949 202.5 2953.4 198.4"/><path d="M2953.4 198.4 C2952.5 194.8 2956 192.8 2961 192.4 C2968 192 2972 195.5 2977.5 196.7 C2980.5 197.2 2983 196.3 2984.3 194"/><path d="M2954.7 196.5 C2954.2 201 2955.5 205.5 2958.6 205.7 C2961 205.7 2962.5 203 2965 201.3"/></g><circle cx="2971.2" cy="200.9" r="1.6" fill="#ced0d6"/></svg>
<svg class="i" style="left:2948px;top:264px" width="42" height="40" viewBox="0 0 42 40" ><g fill="none" stroke="#ced0d6" stroke-width="2.5" stroke-linecap="round" stroke-linejoin="round" ><path d="M14 31 H6 Q3.5 31 3.5 28.5 V6 Q3.5 3.5 6 3.5 H20 Q22.5 3.5 22.5 6 V16 M9 9 H13.5"/><path d="M17.5 35.5 A10 10 0 0 1 37.5 35.5 Z M21.5 21 L23.5 25 M33.5 21 L31.5 25"/></g></svg>
<svg class="i" style="left:2946px;top:342px" width="44" height="42" viewBox="0 0 44 42" ><g fill="none" stroke="#ced0d6" stroke-width="2.5" stroke-linecap="round" stroke-linejoin="round" ><path d="M12 31 H6 Q3.5 31 3.5 28.5 V6 Q3.5 3.5 6 3.5 H20 Q22.5 3.5 22.5 6 V12 M9 9 H13.5"/><rect x="14" y="18" width="22" height="13" rx="1.5"/><path d="M12 37 H38"/></g><circle cx="33" cy="7" r="6.5" fill="#5fb865"/></svg>
<svg class="i" style="left:2947px;top:424px" width="38" height="38" viewBox="0 0 38 38" ><path d="M19 1 Q21 15 37 19 Q21 23 19 37 Q17 23 1 19 Q17 15 19 1 Z" fill="#ced0d6"/></svg>
<div class="r" style="left:2942px;top:492px;width:48px;height:2px;background:#4a4d51;"></div>
<svg class="i" style="left:2946px;top:526px" width="44" height="42" viewBox="0 0 44 42" ><g fill="none" stroke="#ced0d6" stroke-width="2.5" stroke-linecap="round" stroke-linejoin="round" ><path d="M14 34 H6 Q3.5 34 3.5 31.5 V6 Q3.5 3.5 6 3.5 H20 Q22.5 3.5 22.5 6 V14 M9 9 H13.5"/><circle cx="26" cy="25.5" r="7"/><path d="M31.5 31 L38.5 38"/></g></svg>
<div class="r" style="left:700px;top:164px;width:2224px;height:70px;background:#243655;"></div>
<span class="t ui" style="left:732.7px;top:179.5px;color:#c3ccd9;letter-spacing:0.079px;">Gradle </span>
<span class="t ui" style="left:821.8px;top:179.5px;color:#c3ccd9;letter-spacing:0.582px;">project </span>
<span class="t ui" style="left:915px;top:179.5px;color:#c3ccd9;letter-spacing:0.374px;">sync </span>
<span class="t ui" style="left:979.9px;top:179.5px;color:#c3ccd9;letter-spacing:0.355px;">failed. </span>
<span class="t ui" style="left:1062.3px;top:179.5px;color:#c3ccd9;letter-spacing:-0.072px;">Basic </span>
<span class="t ui" style="left:1135.4px;top:179.5px;color:#c3ccd9;letter-spacing:0.765px;">functionality </span>
<span class="t ui" style="left:1296.2px;top:179.5px;color:#c3ccd9;letter-spacing:-0.355px;">(e.g. </span>
<span class="t ui" style="left:1355.6px;top:179.5px;color:#c3ccd9;letter-spacing:0.502px;">editing, </span>
<span class="t ui" style="left:1454.7px;top:179.5px;color:#c3ccd9;letter-spacing:0.570px;">debugging) </span>
<span class="t ui" style="left:1603.6px;top:179.5px;color:#c3ccd9;letter-spacing:0.320px;">will </span>
<span class="t ui" style="left:1650.2px;top:179.5px;color:#c3ccd9;letter-spacing:0.588px;">not </span>
<span class="t ui" style="left:1697.6px;top:179.5px;color:#c3ccd9;letter-spacing:0.697px;">work </span>
<span class="t ui" style="left:1765.6px;top:179.5px;color:#c3ccd9;letter-spacing:0.582px;">properly.</span>
<span class="t ui" style="left:2242.7px;top:179.0px;color:#6ba0f5;letter-spacing:0.405px;">Try Again</span>
<span class="t ui" style="left:2400.7px;top:179.0px;color:#6ba0f5;letter-spacing:0.110px;">Open 'Build' View</span>
<span class="t ui" style="left:2652.4px;top:179.0px;color:#6ba0f5;letter-spacing:0.092px;">Show Log in Finder</span>
<div class="r" style="left:700px;top:234px;width:2224px;height:83px;background:#31302e;"></div>
<div class="r" style="left:700px;top:236px;width:2224px;height:79px;background:#45494a;"></div>
<div class="r" style="left:764px;top:236px;width:2px;height:79px;background:#2f3133;"></div>
<div class="r" style="left:1476px;top:236px;width:2px;height:79px;background:#2f3133;"></div>
<svg class="i" style="left:725.75px;top:264.05px" width="12.5" height="20.5" viewBox="0 0 12.5 20.5" ><g fill="none" stroke="#c4c6ca" stroke-width="2.2" stroke-linecap="round" stroke-linejoin="round" stroke-linecap="butt"><path d="M2 2 L10.5 10.25 L2 18.5"/></g></svg>
<svg class="i" style="left:796px;top:262px" width="38" height="30" viewBox="0 0 38 30" ><g fill="none" stroke="#c4c6ca" stroke-width="2.3" stroke-linecap="round" stroke-linejoin="round" ><circle cx="12" cy="12.3" r="9.2"/><path d="M18.8 19.2 L25.5 26"/></g><path d="M24.5 11.8 H34 L29.2 16.8 Z" fill="#c4c6ca"/></svg>
<span class="t ui" style="left:859px;top:257.0px;color:#f0625f;letter-spacing:0.081px;">OkioStorage$</span>
<div class="r" style="left:1026.5px;top:260px;width:2px;height:34px;background:#c8c8c8;"></div>
<svg class="i" style="left:1217px;top:267px" width="18" height="18" viewBox="0 0 18 18" ><g fill="none" stroke="#73767b" stroke-width="2.2" stroke-linecap="round" stroke-linejoin="round" ><path d="M2 2 L16 16 M16 2 L2 16"/></g></svg>
<svg class="i" style="left:1254px;top:262px" width="34" height="30" viewBox="0 0 34 30" ><g fill="none" stroke="#c4c6ca" stroke-width="2.3" stroke-linecap="round" stroke-linejoin="round" ><path d="M10.5 13.5 L3.5 20.5 L10.5 27.5 M3.5 20.5 H22 Q30 20.5 30 12.5 Q30 4.5 22 4.5 H13"/></g></svg>
<span class="t ui" style="left:1313.6px;top:256.6px;color:#c4c6ca;letter-spacing:-0.600px;">Cc</span>
<span class="t ui" style="left:1368.4px;top:256.6px;color:#c4c6ca;">W</span>
<span class="t ui" style="left:1421.7px;top:256.6px;color:#c4c6ca;letter-spacing:2.984px;">.*</span>
<span class="t ui24" style="left:1538.3px;top:257.5px;color:#f0625f;letter-spacing:-0.391px;">0 results</span>
<svg class="i" style="left:1674px;top:262px" width="24" height="30" viewBox="0 0 24 30" ><g fill="none" stroke="#5f6266" stroke-width="2.3" stroke-linecap="round" stroke-linejoin="round" ><path d="M12 3 V27 M4 11 L12 3 L20 11"/></g></svg>
<svg class="i" style="left:1725.7px;top:262px" width="24" height="30" viewBox="0 0 24 30" ><g fill="none" stroke="#5f6266" stroke-width="2.3" stroke-linecap="round" stroke-linejoin="round" ><path d="M12 3 V27 M4 19 L12 27 L20 19"/></g></svg>
<svg class="i" style="left:1775px;top:262px" width="30" height="30" viewBox="0 0 30 30" ><g fill="none" stroke="#c4c6ca" stroke-width="2.3" stroke-linecap="round" stroke-linejoin="round" ><path d="M3.5 3.5 H26.5 L17.5 14.5 V26.5 L12.5 23.5 V14.5 Z"/></g></svg>
<div class="r" style="left:1839.1000000000001px;top:263.9px;width:4.6px;height:4.6px;background:#c4c6ca;border-radius:50%"></div>
<div class="r" style="left:1839.1000000000001px;top:274.0px;width:4.6px;height:4.6px;background:#c4c6ca;border-radius:50%"></div>
<div class="r" style="left:1839.1000000000001px;top:284.2px;width:4.6px;height:4.6px;background:#c4c6ca;border-radius:50%"></div>
<svg class="i" style="left:2870.5px;top:263.2px" width="27.0" height="27.0" viewBox="0 0 27.0 27.0" ><g fill="none" stroke="#c4c6ca" stroke-width="2.3" stroke-linecap="round" stroke-linejoin="round" ><path d="M2 2 L25.0 25.0 M25.0 2 L2 25.0"/></g></svg>
<div class="r" style="left:700px;top:317px;width:2224px;height:1330px;background:#2b2b2b;"></div>
<div class="r" style="left:700px;top:788px;width:2224px;height:42px;background:#323232;"></div>
<div class="r" style="left:1167.1px;top:788px;width:158.4px;height:42px;background:#214283;"></div>
<div class="r" style="left:844.4px;top:362px;width:1.6px;height:1285px;background:#3a3a3a;"></div>
<div class="r" style="left:2578px;top:363px;width:2.2px;height:1284px;background:#4c4c4c;"></div>
<div class="r" style="left:902.1999999999999px;top:536px;width:1.5px;height:168px;background:#383838;"></div>
<div class="r" style="left:902.1999999999999px;top:746px;width:1.5px;height:588px;background:#383838;"></div>
<div class="r" style="left:959.8px;top:788px;width:1.5px;height:462px;background:#383838;"></div>
<div class="r" style="left:1017.3999999999999px;top:830px;width:1.5px;height:252px;background:#383838;"></div>
<div class="r" style="left:1075.0px;top:914px;width:1.5px;height:84px;background:#383838;"></div>
<div class="r" style="left:1132.6px;top:956px;width:1.5px;height:42px;background:#383838;"></div>
<div class="r" style="left:906px;top:362px;width:4.2px;height:82px;background:#3d543b;"></div>
<div class="r" style="left:906px;top:1426px;width:4.2px;height:221px;background:#3d543b;"></div>
<div class="ln mono" style="top:319.5px">37</div>
<div class="cl mono" style="top:319.5px"><span class="k">public actual object</span> PreferenceDataStoreFactory {</div>
<div class="r" style="left:700px;top:315.5px;width:2224px;height:2px;background:#262626;"></div>
<div class="r" style="left:700px;top:360px;width:2224px;height:1.7px;background:#3a3a3a;"></div>
<div class="r" style="left:700px;top:361.7px;width:2224px;height:7px;background:transparent;background:linear-gradient(#252525,#2b2b2b)"></div>
<div class="r" style="left:2654.6px;top:318px;width:265.2px;height:48px;background:#2b2b2b;border-radius:0 0 7px 7px;box-shadow:0 1px 2px rgba(0,0,0,.2)"></div>
<div class="ln mono" style="top:453px">57</div>
<div class="ln mono" style="top:495px">58</div>
<div class="ln mono" style="top:537px">59</div>
<div class="ln mono" style="top:579px">60</div>
<div class="ln mono" style="top:621px">61</div>
<div class="ln mono" style="top:663px">62</div>
<div class="ln mono" style="top:705px">63</div>
<div class="ln mono" style="top:747px">64</div>
<div class="ln mono" style="top:789px;color:#a4a3a3">65</div>
<div class="ln mono" style="top:831px">66</div>
<div class="ln mono" style="top:873px">67</div>
<div class="ln mono" style="top:915px">68</div>
<div class="ln mono" style="top:957px">69</div>
<div class="ln mono" style="top:999px">70</div>
<div class="ln mono" style="top:1041px">71</div>
<div class="ln mono" style="top:1083px">72</div>
<div class="ln mono" style="top:1125px">73</div>
<div class="ln mono" style="top:1167px">74</div>
<div class="ln mono" style="top:1209px">75</div>
<div class="ln mono" style="top:1251px">76</div>
<div class="ln mono" style="top:1293px">77</div>
<div class="ln mono" style="top:1335px">78</div>
<div class="ln mono" style="top:1377px">79</div>
<div class="cl mono" style="top:453px">    <span class="an">@JvmOverloads</span></div>
<div class="cl mono" style="top:495px">    <span class="k">public fun</span> <span class="fd">create</span>(</div>
<div class="cl mono" style="top:537px">        corruptionHandler: ReplaceFileCorruptionHandler&lt;Preferences&gt;? = <span class="k">null,</span></div>
<div class="cl mono" style="top:579px">        migrations: List&lt;DataMigration&lt;Preferences&gt;&gt; = <span class="it">listOf</span>()<span class="k">,</span></div>
<div class="cl mono" style="top:621px">        scope: CoroutineScope = <span class="it">CoroutineScope</span>(<span class="hint" style="width:105.7px;margin-left:2.2px;margin-right:6.7px">context:</span>Dispatchers.<span class="p">IO</span> + <span class="it">SupervisorJob</span>())<span class="k">,</span></div>
<div class="cl mono" style="top:663px">        produceFile: () -&gt; File</div>
<div class="cl mono" style="top:705px">    ): DataStore&lt;Preferences&gt; {</div>
<div class="cl mono" style="top:747px">        <span class="k">val</span> delegate = create(</div>
<div class="cl mono" style="top:789px">            <span class="na">storage =</span> OkioStorage(FileSystem.<span class="p">SYSTEM</span><span class="k">,</span> PreferencesSerializer) {</div>
<div class="cl mono" style="top:831px">                <span class="k">val</span> file = produceFile()</div>
<div class="cl mono" style="top:873px">                <span class="it">check</span>(<span class="hint" style="width:80.7px;margin-left:2.5px;margin-right:6.7px">value:</span>file.<span class="p it">extension</span> == PreferencesSerializer.<span class="p">fileExtension</span>) {</div>
<div class="cl mono" style="top:915px">                    <span class="s">"File extension for file: </span><span class="k">$</span>file<span class="s"> does not match required extension for"</span> +</div>
<div class="cl mono" style="top:957px">                        <span class="s">" Preferences file: </span><span class="k">${</span>PreferencesSerializer.<span class="p">fileExtension</span><span class="k">}</span><span class="s">"</span></div>
<div class="cl mono" style="top:999px">                }</div>
<div class="cl mono" style="top:1041px">                file.<span class="p it">absoluteFile</span>.<span class="fd it">toOkioPath</span>()</div>
<div class="cl mono" style="top:1083px">            }<span class="k">,</span></div>
<div class="cl mono" style="top:1125px">            <span class="na">corruptionHandler =</span> corruptionHandler<span class="k">,</span></div>
<div class="cl mono" style="top:1167px">            <span class="na">migrations =</span> migrations<span class="k">,</span></div>
<div class="cl mono" style="top:1209px">            <span class="na">scope =</span> scope</div>
<div class="cl mono" style="top:1251px">        )</div>
<div class="cl mono" style="top:1293px">        <span class="k">return</span> PreferenceDataStore(delegate)</div>
<div class="cl mono" style="top:1335px">    }</div>
<span class="t docs" style="left:939.6px;top:385.4px;color:#72a563;letter-spacing:0.432px;">Returns: </span>
<span class="t docs" style="left:1051px;top:385.4px;color:#72a563;letter-spacing:-0.405px;">a </span>
<span class="t docs" style="left:1072.3px;top:385.4px;color:#72a563;letter-spacing:0.779px;">new </span>
<span class="t docs" style="left:1131.4px;top:385.4px;color:#72a563;letter-spacing:0.431px;">DataStore </span>
<span class="t docs" style="left:1262.4px;top:385.4px;color:#72a563;letter-spacing:0.558px;">instance </span>
<span class="t docs" style="left:1373.5px;top:385.4px;color:#72a563;letter-spacing:1.080px;">with </span>
<span class="t docs" style="left:1433.4px;top:385.4px;color:#72a563;letter-spacing:0.849px;">the </span>
<span class="t docs" style="left:1481px;top:385.4px;color:#72a563;letter-spacing:0.765px;">provided </span>
<span class="t docs" style="left:1596.9px;top:385.4px;color:#72a563;letter-spacing:0.746px;">configuration</span>
<div class="r" style="left:1204px;top:1446px;width:150px;height:37px;background:#262626;border-radius:7px"></div>
<span class="t doc" style="left:934.7px;top:1444.8px;color:#72a563;letter-spacing:0.002px;">Create </span>
<span class="t doc" style="left:1024.9px;top:1444.8px;color:#72a563;letter-spacing:-0.145px;">an </span>
<span class="t doc" style="left:1062.7px;top:1444.8px;color:#72a563;letter-spacing:0.080px;">instance </span>
<span class="t doc" style="left:1173.5px;top:1444.8px;color:#72a563;letter-spacing:-0.237px;">of</span>
<span class="t mono" style="left:1213.8px;top:1445.7px;color:#5a8fe6;letter-spacing:0.06px;text-decoration:underline;text-decoration-thickness:2px;text-underline-offset:5px">DataStore</span>
<span class="t doc" style="left:1355.8px;top:1444.8px;color:#72a563;letter-spacing:-0.541px;">. </span>
<span class="t doc" style="left:1370px;top:1444.8px;color:#72a563;letter-spacing:-0.100px;">Never </span>
<span class="t doc" style="left:1450.4px;top:1444.8px;color:#72a563;letter-spacing:0.303px;">create </span>
<span class="t doc" style="left:1536.6px;top:1444.8px;color:#72a563;letter-spacing:0.081px;">more </span>
<span class="t doc" style="left:1607.3px;top:1444.8px;color:#72a563;letter-spacing:0.126px;">than </span>
<span class="t doc" style="left:1669.1px;top:1444.8px;color:#72a563;letter-spacing:-0.033px;">one </span>
<span class="t doc" style="left:1722.5px;top:1444.8px;color:#72a563;letter-spacing:0.069px;">instance </span>
<span class="t doc" style="left:1833.2px;top:1444.8px;color:#72a563;letter-spacing:0.707px;">of </span>
<span class="t doc" style="left:1865.9px;top:1444.8px;color:#72a563;letter-spacing:-0.107px;">DataStore </span>
<span class="t doc" style="left:1996.3px;top:1444.8px;color:#72a563;letter-spacing:0.641px;">for </span>
<span class="t doc" style="left:2038.6px;top:1444.8px;color:#72a563;letter-spacing:-0.519px;">a </span>
<span class="t doc" style="left:2060.5px;top:1444.8px;color:#72a563;letter-spacing:-0.188px;">given</span>
<span class="t doc" style="left:934.7px;top:1487.2px;color:#72a563;letter-spacing:0.294px;">file; </span>
<span class="t doc" style="left:986.9px;top:1487.2px;color:#72a563;letter-spacing:0.144px;">doing </span>
<span class="t doc" style="left:1062.7px;top:1487.2px;color:#72a563;letter-spacing:-0.162px;">so </span>
<span class="t doc" style="left:1098.9px;top:1487.2px;color:#72a563;letter-spacing:0.004px;">can </span>
<span class="t doc" style="left:1150.9px;top:1487.2px;color:#72a563;letter-spacing:0.010px;">break </span>
<span class="t doc" style="left:1227.4px;top:1487.2px;color:#72a563;letter-spacing:0.061px;">all </span>
<span class="t doc" style="left:1262.8px;top:1487.2px;color:#72a563;letter-spacing:-0.087px;">DataStore </span>
<span class="t doc" style="left:1393.4px;top:1487.2px;color:#72a563;letter-spacing:0.489px;">functionality. </span>
<span class="t doc" style="left:1559.2px;top:1487.2px;color:#72a563;letter-spacing:0.363px;">You </span>
<span class="t doc" style="left:1614.7px;top:1487.2px;color:#72a563;letter-spacing:-0.013px;">should </span>
<span class="t doc" style="left:1703.3px;top:1487.2px;color:#72a563;letter-spacing:0.223px;">consider </span>
<span class="t doc" style="left:1816.9px;top:1487.2px;color:#72a563;letter-spacing:-0.149px;">managing </span>
<span class="t doc" style="left:1944px;top:1487.2px;color:#72a563;letter-spacing:0.272px;">your </span>
<span class="t doc" style="left:2006.5px;top:1487.2px;color:#72a563;letter-spacing:-0.216px;">DataStore</span>
<span class="t doc" style="left:934.7px;top:1528.4px;color:#72a563;letter-spacing:0.125px;">instance </span>
<span class="t doc" style="left:1045.9px;top:1528.4px;color:#72a563;letter-spacing:-0.396px;">as </span>
<span class="t doc" style="left:1081.4px;top:1528.4px;color:#72a563;letter-spacing:-0.419px;">a </span>
<span class="t doc" style="left:1103.5px;top:1528.4px;color:#72a563;letter-spacing:0.030px;">singleton.</span>
<div class="r" style="left:1051px;top:1606px;width:118.5px;height:37px;background:#262626;border-radius:7px"></div>
<span class="t docs" style="left:939.2px;top:1604.7px;color:#72a563;letter-spacing:-0.312px;">Params:</span>
<span class="t mono" style="left:1060.7px;top:1605.1px;color:#a9b7c6;letter-spacing:-0.19px;text-decoration:underline;text-decoration-thickness:2px;text-underline-offset:5px">storage</span>
<span class="t docs" style="left:1178.9px;top:1604.7px;color:#72a563;letter-spacing:1.206px;">- </span>
<span class="t docs" style="left:1197.5px;top:1604.7px;color:#72a563;letter-spacing:0.442px;">The </span>
<span class="t docs" style="left:1252.3px;top:1604.7px;color:#72a563;letter-spacing:0.654px;">storage </span>
<span class="t docs" style="left:1353.3px;top:1604.7px;color:#72a563;letter-spacing:0.860px;">object </span>
<span class="t docs" style="left:1437.4px;top:1604.7px;color:#72a563;letter-spacing:0.709px;">defines </span>
<span class="t docs" style="left:1535.9px;top:1604.7px;color:#72a563;letter-spacing:0.659px;">where </span>
<span class="t docs" style="left:1619.4px;top:1604.7px;color:#72a563;letter-spacing:0.505px;">and </span>
<span class="t docs" style="left:1673px;top:1604.7px;color:#72a563;letter-spacing:0.579px;">how </span>
<span class="t docs" style="left:1731.3px;top:1604.7px;color:#72a563;letter-spacing:1.074px;">the </span>
<span class="t docs" style="left:1779.8px;top:1604.7px;color:#72a563;letter-spacing:0.632px;">preferences </span>
<span class="t docs" style="left:1934.7px;top:1604.7px;color:#72a563;letter-spacing:0.826px;">will </span>
<span class="t docs" style="left:1983px;top:1604.7px;color:#72a563;letter-spacing:0.252px;">be </span>
<span class="t docs" style="left:2020.6px;top:1604.7px;color:#72a563;letter-spacing:0.547px;">stored.</span>
<span class="t ui22" style="left:2702.6px;top:324.6px;color:#c6c6c6;letter-spacing:0.309px;">Reader Mode</span>
<div class="r" style="left:2868px;top:326px;width:2px;height:35.6px;background:#585858;"></div>
<svg class="i" style="left:2884px;top:332px" width="30" height="26" viewBox="0 0 30 26" ><path d="M4.5 13.5 L10.5 19.5 L24 5.5" fill="none" stroke="#5f9f65" stroke-width="7.2" stroke-linejoin="miter" stroke-linecap="butt"/><path d="M5.2 14.2 L10.5 19.5 L23.3 6.2" fill="none" stroke="#2b2b2b" stroke-width="3" stroke-linejoin="miter" stroke-linecap="butt"/></svg>
<div class="r" style="left:2904px;top:629px;width:14px;height:334px;background:#464646;border-radius:7px"></div>
<div class="r" style="left:2896px;top:412px;width:28px;height:4px;background:#2f7d2f;"></div>
<div class="r" style="left:0px;top:1646px;width:3004px;height:54px;background:#3e3f41;"></div>
<div class="r" style="left:0px;top:1646px;width:3004px;height:2px;background:#474747;"></div>
<div class="r" style="left:480px;top:1648px;width:653.5px;height:6px;background:#5b5e60;border-radius:3px"></div>
<div class="r" style="left:0px;top:1672px;width:4px;height:8px;background:#3e3f41;"></div>
<svg class="i" style="left:-7.5px;top:1667px" width="12" height="18" viewBox="0 0 12 18" ><g fill="none" stroke="#9da0a5" stroke-width="2.2" stroke-linecap="round" stroke-linejoin="round" ><path d="M2 2 L9 9 L2 16"/></g></svg>
<span class="t ui" style="left:24.5px;top:1654.5px;color:#b4b6b9;letter-spacing:0.403px;">androidx</span>
<svg class="i" style="left:148.8px;top:1666px" width="14" height="20" viewBox="0 0 14 20" ><g fill="none" stroke="#9da0a5" stroke-width="2.2" stroke-linecap="round" stroke-linejoin="round" ><path d="M2.5 2.5 L11 10 L2.5 17.5"/></g></svg>
<span class="t ui" style="left:180.2px;top:1654.5px;color:#b4b6b9;letter-spacing:0.615px;">datastore</span>
<svg class="i" style="left:316.5px;top:1666px" width="14" height="20" viewBox="0 0 14 20" ><g fill="none" stroke="#9da0a5" stroke-width="2.2" stroke-linecap="round" stroke-linejoin="round" ><path d="M2.5 2.5 L11 10 L2.5 17.5"/></g></svg>
<span class="t ui" style="left:348.5px;top:1654.5px;color:#b4b6b9;letter-spacing:0.451px;">preferences</span>
<svg class="i" style="left:514.5px;top:1666px" width="14" height="20" viewBox="0 0 14 20" ><g fill="none" stroke="#9da0a5" stroke-width="2.2" stroke-linecap="round" stroke-linejoin="round" ><path d="M2.5 2.5 L11 10 L2.5 17.5"/></g></svg>
<span class="t ui" style="left:546.4px;top:1654.5px;color:#b4b6b9;letter-spacing:0.423px;">core</span>
<svg class="i" style="left:618.8px;top:1666px" width="14" height="20" viewBox="0 0 14 20" ><g fill="none" stroke="#9da0a5" stroke-width="2.2" stroke-linecap="round" stroke-linejoin="round" ><path d="M2.5 2.5 L11 10 L2.5 17.5"/></g></svg>
<svg class="i" style="left:654.3px;top:1662.5px" width="23.6" height="23.6" viewBox="0 0 23.6 23.6" ><path d="M2.5 1.0 H21.6 L13.3 11.8 L21.6 22.6 H2.5 Q1.0 22.6 1.0 21.1 V2.5 Q1.0 1.0 2.5 1.0 Z" fill="#2f2936" stroke="#b57bef" stroke-width="2" stroke-linejoin="round"/></svg>
<span class="t ui" style="left:691.2px;top:1654.5px;color:#b4b6b9;letter-spacing:0.398px;">PreferenceDataStoreFactory.jvm.kt</span>
<span class="t ui" style="left:1182.7px;top:1654.5px;color:#b4b6b9;letter-spacing:-0.141px;">Gradle Build Running</span>
<div class="r" style="left:1453.6px;top:1672.2px;width:292.4px;height:8px;background:#6f6f6f;border-radius:4px;background:linear-gradient(90deg,#6a6a6a,#8a8a8a 50%,#6a6a6a)"></div>
<div class="r" style="left:1758px;top:1660px;width:32px;height:32px;background:#57595c;border-radius:50%"></div>
<svg class="i" style="left:1765.5px;top:1667.5px" width="17.0" height="17.0" viewBox="0 0 17.0 17.0" ><g fill="none" stroke="#9a9da1" stroke-width="2.2" stroke-linecap="round" stroke-linejoin="round" ><path d="M2 2 L15.0 15.0 M15.0 2 L2 15.0"/></g></svg>
<span class="t ui" style="left:1812.8px;top:1655.5px;color:#6ba0f5;letter-spacing:-0.069px;">Show all (2)</span>
<span class="t ui" style="left:1984.2px;top:1654.5px;color:#b4b6b9;letter-spacing:0.079px;">65:34 (11 chars)</span>
<span class="t ui" style="left:2214.8px;top:1654.5px;color:#6f7275;letter-spacing:-2.516px;">LF</span>
<span class="t ui" style="left:2277px;top:1654.5px;color:#b4b6b9;letter-spacing:0.100px;">UTF-8</span>
<svg class="i" style="left:2389px;top:1662px" width="30" height="28" viewBox="0 0 30 28" ><g fill="none" stroke="#ced0d6" stroke-width="2.1" stroke-linecap="round" stroke-linejoin="round" ><path d="M4.5 3 H25 Q26.8 3 26.8 4.8 V25.8 L21.3 20.6 H4.5 Q2.8 20.6 2.8 18.8 V4.8 Q2.8 3 4.5 3 Z"/><path d="M14.8 7 V13.3"/></g><circle cx="14.8" cy="16.8" r="1.3" fill="#ced0d6"/></svg>
<svg class="i" style="left:2453px;top:1658px" width="34" height="34" viewBox="0 0 34 34" ><path d="M13 9 Q14.5 19.5 25 21 Q14.5 22.5 13 33 Q11.5 22.5 1 21 Q11.5 19.5 13 9 Z" fill="#ced0d6"/><g fill="none" stroke="#ced0d6" stroke-width="1.8" stroke-linecap="round" stroke-linejoin="round" ><circle cx="24.5" cy="8.5" r="5.8"/><path d="M20.5 12.5 L28.5 4.5"/></g></svg>
<span class="t ui" style="left:2525.2px;top:1654.5px;color:#b4b6b9;letter-spacing:0.189px;">4 spaces</span>
<svg class="i" style="left:2668.5px;top:1661px" width="24.5" height="28.5" viewBox="0 0 26 30" ><g fill="none" stroke="#ced0d6" stroke-width="2.1" stroke-linecap="round" stroke-linejoin="round" ><circle cx="6" cy="6.5" r="4.3"/><circle cx="18" cy="11" r="4.3"/><path d="M6 11 V27.5 M6 19 H12 Q18 19 18 15.5"/></g></svg>
<span class="t ui" style="left:2703px;top:1654.5px;color:#b4b6b9;letter-spacing:0.769px;">hotix-datastore-crash</span>
<div class="r" style="left:0px;top:0px;width:3004px;height:2px;background:transparent;background:linear-gradient(90deg,#8b8f9b 0px,#8b8e98 600px,#8a8b8e 1000px,#949596 2900px)"></div>
<svg class="i" style="left:2964px;top:0" width="40" height="40" viewBox="2964 0 40 40"><path d="M2984 0 H3004 V22 A20 20 0 0 0 2985 1.5 Z" fill="#0c0e20"/><path d="M2984 0 V2 H2990 V0 Z" fill="#3e3f41"/><path d="M2984 1 H2985 A20 20 0 0 1 3004.6 21" fill="none" stroke="#7e8084" stroke-width="1.6"/><path d="M2984 0 H3004 V15 A20 20 0 0 0 2990 0.3 Z" fill="#0c0e20"/></svg>
<svg class="i" style="left:2974px;top:1670px" width="30" height="30" viewBox="2974 1670 30 30"><path d="M3004 1686 A20 20 0 0 1 2995.5 1700 H3004 Z" fill="#0c0e20"/><path d="M3004.6 1684 A20 20 0 0 1 2994 1700.6" fill="none" stroke="#6a6c70" stroke-width="1.5"/></svg>
</div></body></html>
